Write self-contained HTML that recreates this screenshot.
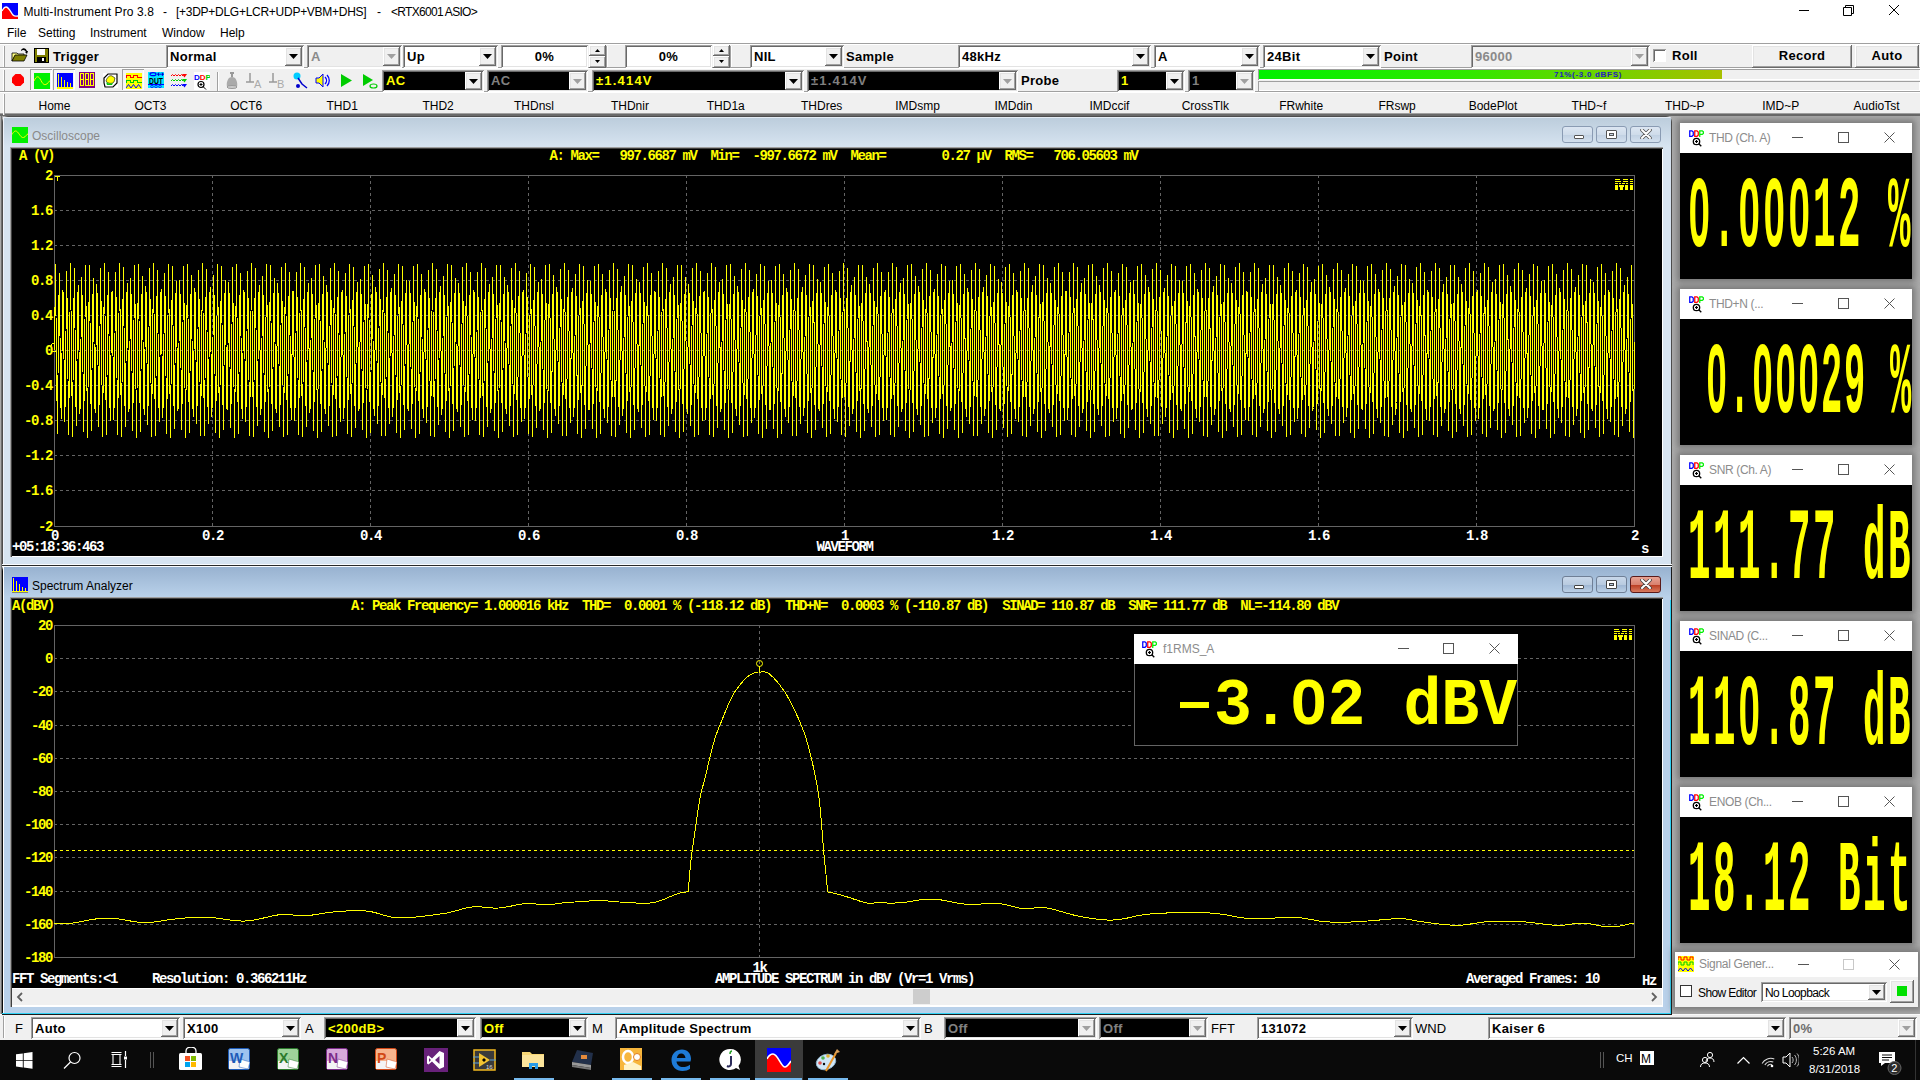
<!DOCTYPE html><html><head><meta charset="utf-8"><style>
*{margin:0;padding:0;box-sizing:border-box}
html,body{width:1920px;height:1080px;overflow:hidden;background:#ababab;position:relative}
div,svg{position:absolute}
.t{white-space:pre;line-height:1}
.ui{font-family:"Liberation Sans",sans-serif;font-size:12px;color:#000}
.tb{font-family:"Liberation Sans",sans-serif;font-size:13px;font-weight:bold;color:#000;letter-spacing:0.3px}
.pm{font-family:"Liberation Mono",monospace;font-weight:bold;font-size:14px;letter-spacing:-1.4px}
</style></head><body>
<div style="left:0px;top:0px;width:1920px;height:43px;background:#fff"></div>
<svg style="left:2px;top:3px" width="16" height="16"><rect width="16" height="16" fill="#f00"/><path d="M0 0H16V13 C14 13 13 14 11 12 C9 10 7 4 4 4 C2 4 1 6 0 8Z" fill="#00f"/><path d="M0 8 C1 6 2 4 4 4 C7 4 9 10 11 12 C13 14 14 13 16 13" stroke="#fff" stroke-width="1.3" fill="none"/></svg>
<div class="t ui" style="left:23.5px;top:6px;letter-spacing:0.1px">Multi-Instrument Pro 3.8</div>
<div class="t ui" style="left:163px;top:6px;">-</div>
<div class="t ui" style="left:176px;top:6px;letter-spacing:-0.27px">[+3DP+DLG+LCR+UDP+VBM+DHS]</div>
<div class="t ui" style="left:377px;top:6px;">-</div>
<div class="t ui" style="left:391px;top:6px;letter-spacing:-0.7px">&lt;RTX6001 ASIO&gt;</div>
<div style="left:1799px;top:10px;width:10px;height:1px;background:#000"></div>
<svg style="left:1843px;top:5px" width="11" height="11"><path d="M0.5 2.5h8v8h-8z M2.5 2.5v-2h8v8h-2" stroke="#000" fill="none"/></svg>
<svg style="left:1889px;top:5px" width="11" height="11"><path d="M0 0L10 10M10 0L0 10" stroke="#000" stroke-width="1"/></svg>
<div class="t ui" style="left:7px;top:27px;">File</div>
<div class="t ui" style="left:38px;top:27px;">Setting</div>
<div class="t ui" style="left:90px;top:27px;">Instrument</div>
<div class="t ui" style="left:162px;top:27px;">Window</div>
<div class="t ui" style="left:220px;top:27px;">Help</div>
<div style="left:0px;top:43px;width:1920px;height:1px;background:#a0a0a0"></div>
<div style="left:0px;top:44px;width:1920px;height:71px;background:#f0f0f0"></div>
<div style="left:0px;top:44px;width:1920px;height:1px;background:#fff"></div>
<div style="left:0px;top:67px;width:1920px;height:1px;background:#a0a0a0"></div>
<div style="left:0px;top:68px;width:1920px;height:1px;background:#fff"></div>
<div style="left:0px;top:91px;width:1920px;height:1px;background:#a0a0a0"></div>
<div style="left:0px;top:92px;width:1920px;height:1px;background:#fff"></div>
<div style="left:0px;top:113px;width:1920px;height:1px;background:#a0a0a0"></div>
<div style="left:0px;top:114px;width:1920px;height:2px;background:#696969"></div>
<div style="left:3px;top:46px;width:1px;height:21px;background:#fff"></div>
<div style="left:4px;top:46px;width:1px;height:21px;background:#a0a0a0"></div>
<div style="left:3px;top:70px;width:1px;height:21px;background:#fff"></div>
<div style="left:4px;top:70px;width:1px;height:21px;background:#a0a0a0"></div>
<div style="left:3px;top:94px;width:1px;height:21px;background:#fff"></div>
<div style="left:4px;top:94px;width:1px;height:21px;background:#a0a0a0"></div>
<svg style="left:11px;top:48px" width="17" height="15"><path d="M1 5h5l1 1h6v2H4L1 13Z" fill="#ffff80" stroke="#000" stroke-width="0.8"/><path d="M1 13L4 7h12l-3 6Z" fill="#808000" stroke="#000" stroke-width="0.8"/><path d="M10 3c2-2 4-1 5 1l-1 0 2 2 1-3h-1c-1-3-4-4-6-1" fill="#000"/></svg>
<svg style="left:34px;top:48px" width="15" height="15"><rect x="0.5" y="0.5" width="14" height="14" fill="#808000" stroke="#000"/><rect x="3" y="1" width="8" height="6" fill="#fff"/><rect x="3" y="9" width="9" height="5" fill="#000"/><rect x="8" y="10" width="2" height="3" fill="#fff"/></svg>
<div class="t tb" style="left:53px;top:50px;">Trigger</div>
<div style="left:166px;top:45px;width:138px;height:23px;box-shadow:inset 1px 1px #a0a0a0,inset -1px -1px #fff,inset 2px 2px #696969,inset -2px -2px #e3e3e3;background:#fff"></div>
<div style="left:285px;top:47px;width:17px;height:19px;box-shadow:inset -1px -1px #696969,inset 1px 1px #fff,inset -2px -2px #a0a0a0,inset 2px 2px #e3e3e3;background:#f0f0f0;"></div>
<svg style="left:289px;top:54px" width="9" height="5"><path d="M0 0H9L4.5 5Z" fill="#000"/></svg>
<div class="t tb" style="left:170px;top:50px;color:#000;">Normal</div>
<div style="left:307px;top:45px;width:95px;height:23px;box-shadow:inset 1px 1px #a0a0a0,inset -1px -1px #fff,inset 2px 2px #696969,inset -2px -2px #e3e3e3;background:#f0f0f0"></div>
<div style="left:383px;top:47px;width:17px;height:19px;box-shadow:inset -1px -1px #696969,inset 1px 1px #fff,inset -2px -2px #a0a0a0,inset 2px 2px #e3e3e3;background:#f0f0f0;"></div>
<svg style="left:387px;top:54px" width="9" height="5"><path d="M0 0H9L4.5 5Z" fill="#a0a0a0"/></svg>
<div class="t tb" style="left:311px;top:50px;color:#8a8a8a;">A</div>
<div style="left:403px;top:45px;width:95px;height:23px;box-shadow:inset 1px 1px #a0a0a0,inset -1px -1px #fff,inset 2px 2px #696969,inset -2px -2px #e3e3e3;background:#fff"></div>
<div style="left:479px;top:47px;width:17px;height:19px;box-shadow:inset -1px -1px #696969,inset 1px 1px #fff,inset -2px -2px #a0a0a0,inset 2px 2px #e3e3e3;background:#f0f0f0;"></div>
<svg style="left:483px;top:54px" width="9" height="5"><path d="M0 0H9L4.5 5Z" fill="#000"/></svg>
<div class="t tb" style="left:407px;top:50px;color:#000;">Up</div>
<div style="left:501px;top:45px;width:87px;height:23px;box-shadow:inset 1px 1px #a0a0a0,inset -1px -1px #fff,inset 2px 2px #696969,inset -2px -2px #e3e3e3;background:#fff"></div>
<div class="t tb" style="left:501px;top:50px;width:87px;text-align:center">0%</div>
<div style="left:589px;top:45px;width:17px;height:11px;box-shadow:inset -1px -1px #696969,inset 1px 1px #fff,inset -2px -2px #a0a0a0,inset 2px 2px #e3e3e3;background:#f0f0f0;"></div>
<div style="left:589px;top:56px;width:17px;height:12px;box-shadow:inset -1px -1px #696969,inset 1px 1px #fff,inset -2px -2px #a0a0a0,inset 2px 2px #e3e3e3;background:#f0f0f0;"></div>
<svg style="left:595px;top:49px" width="5" height="3"><path d="M0 3H5L2.5 0Z" fill="#000"/></svg>
<svg style="left:595px;top:60px" width="5" height="3"><path d="M0 0H5L2.5 3Z" fill="#000"/></svg>
<div style="left:606px;top:46px;width:1px;height:21px;background:#a0a0a0"></div>
<div style="left:607px;top:46px;width:1px;height:21px;background:#fff"></div>
<div style="left:625px;top:45px;width:87px;height:23px;box-shadow:inset 1px 1px #a0a0a0,inset -1px -1px #fff,inset 2px 2px #696969,inset -2px -2px #e3e3e3;background:#fff"></div>
<div class="t tb" style="left:625px;top:50px;width:87px;text-align:center">0%</div>
<div style="left:713px;top:45px;width:17px;height:11px;box-shadow:inset -1px -1px #696969,inset 1px 1px #fff,inset -2px -2px #a0a0a0,inset 2px 2px #e3e3e3;background:#f0f0f0;"></div>
<div style="left:713px;top:56px;width:17px;height:12px;box-shadow:inset -1px -1px #696969,inset 1px 1px #fff,inset -2px -2px #a0a0a0,inset 2px 2px #e3e3e3;background:#f0f0f0;"></div>
<svg style="left:719px;top:49px" width="5" height="3"><path d="M0 3H5L2.5 0Z" fill="#000"/></svg>
<svg style="left:719px;top:60px" width="5" height="3"><path d="M0 0H5L2.5 3Z" fill="#000"/></svg>
<div style="left:730px;top:46px;width:1px;height:21px;background:#a0a0a0"></div>
<div style="left:731px;top:46px;width:1px;height:21px;background:#fff"></div>
<div style="left:750px;top:45px;width:94px;height:23px;box-shadow:inset 1px 1px #a0a0a0,inset -1px -1px #fff,inset 2px 2px #696969,inset -2px -2px #e3e3e3;background:#fff"></div>
<div style="left:825px;top:47px;width:17px;height:19px;box-shadow:inset -1px -1px #696969,inset 1px 1px #fff,inset -2px -2px #a0a0a0,inset 2px 2px #e3e3e3;background:#f0f0f0;"></div>
<svg style="left:829px;top:54px" width="9" height="5"><path d="M0 0H9L4.5 5Z" fill="#000"/></svg>
<div class="t tb" style="left:754px;top:50px;color:#000;">NIL</div>
<div class="t tb" style="left:846px;top:50px;">Sample</div>
<div style="left:958px;top:45px;width:193px;height:23px;box-shadow:inset 1px 1px #a0a0a0,inset -1px -1px #fff,inset 2px 2px #696969,inset -2px -2px #e3e3e3;background:#fff"></div>
<div style="left:1132px;top:47px;width:17px;height:19px;box-shadow:inset -1px -1px #696969,inset 1px 1px #fff,inset -2px -2px #a0a0a0,inset 2px 2px #e3e3e3;background:#f0f0f0;"></div>
<svg style="left:1136px;top:54px" width="9" height="5"><path d="M0 0H9L4.5 5Z" fill="#000"/></svg>
<div class="t tb" style="left:962px;top:50px;color:#000;">48kHz</div>
<div style="left:1154px;top:45px;width:106px;height:23px;box-shadow:inset 1px 1px #a0a0a0,inset -1px -1px #fff,inset 2px 2px #696969,inset -2px -2px #e3e3e3;background:#fff"></div>
<div style="left:1241px;top:47px;width:17px;height:19px;box-shadow:inset -1px -1px #696969,inset 1px 1px #fff,inset -2px -2px #a0a0a0,inset 2px 2px #e3e3e3;background:#f0f0f0;"></div>
<svg style="left:1245px;top:54px" width="9" height="5"><path d="M0 0H9L4.5 5Z" fill="#000"/></svg>
<div class="t tb" style="left:1158px;top:50px;color:#000;">A</div>
<div style="left:1263px;top:45px;width:118px;height:23px;box-shadow:inset 1px 1px #a0a0a0,inset -1px -1px #fff,inset 2px 2px #696969,inset -2px -2px #e3e3e3;background:#fff"></div>
<div style="left:1362px;top:47px;width:17px;height:19px;box-shadow:inset -1px -1px #696969,inset 1px 1px #fff,inset -2px -2px #a0a0a0,inset 2px 2px #e3e3e3;background:#f0f0f0;"></div>
<svg style="left:1366px;top:54px" width="9" height="5"><path d="M0 0H9L4.5 5Z" fill="#000"/></svg>
<div class="t tb" style="left:1267px;top:50px;color:#000;">24Bit</div>
<div class="t tb" style="left:1384px;top:50px;">Point</div>
<div style="left:1471px;top:45px;width:179px;height:23px;box-shadow:inset 1px 1px #a0a0a0,inset -1px -1px #fff,inset 2px 2px #696969,inset -2px -2px #e3e3e3;background:#f0f0f0"></div>
<div style="left:1631px;top:47px;width:17px;height:19px;box-shadow:inset -1px -1px #696969,inset 1px 1px #fff,inset -2px -2px #a0a0a0,inset 2px 2px #e3e3e3;background:#f0f0f0;"></div>
<svg style="left:1635px;top:54px" width="9" height="5"><path d="M0 0H9L4.5 5Z" fill="#a0a0a0"/></svg>
<div class="t tb" style="left:1475px;top:50px;color:#8a8a8a;">96000</div>
<div style="left:1653px;top:49px;width:13px;height:13px;box-shadow:inset 1px 1px #a0a0a0,inset -1px -1px #fff,inset 2px 2px #696969;background:#fff"></div>
<div class="t tb" style="left:1672px;top:49px;">Roll</div>
<div style="left:1752px;top:45px;width:100px;height:23px;box-shadow:inset -1px -1px #696969,inset 1px 1px #fff,inset -2px -2px #a0a0a0,inset 2px 2px #e3e3e3;background:#f0f0f0;"></div>
<div class="t tb" style="left:1752px;top:49px;width:100px;text-align:center">Record</div>
<div style="left:1855px;top:45px;width:64px;height:23px;box-shadow:inset -1px -1px #696969,inset 1px 1px #fff,inset -2px -2px #a0a0a0,inset 2px 2px #e3e3e3;background:#f0f0f0;"></div>
<div class="t tb" style="left:1855px;top:49px;width:64px;text-align:center">Auto</div>
<svg style="left:12px;top:74px" width="12" height="12"><path d="M3.5 0h5l3.5 3.5v5L8.5 12h-5L0 8.5v-5Z" fill="#f00"/></svg>
<div style="left:30px;top:69px;width:22px;height:21px;box-shadow:inset 1px 1px #a0a0a0,inset -1px -1px #fff;background:#f4f4f4"></div>
<svg style="left:34px;top:73px" width="16" height="16"><rect width="16" height="16" fill="#00f000"/><path d="M0 8C2.5 2.5 4.5 2.5 7 7.5S11.5 13.5 16 7.5" stroke="#ff0" stroke-width="1" fill="none"/></svg>
<div style="left:53px;top:69px;width:22px;height:21px;box-shadow:inset 1px 1px #a0a0a0,inset -1px -1px #fff;background:#f4f4f4"></div>
<svg style="left:57px;top:73px" width="16" height="16" shape-rendering="crispEdges"><rect width="16" height="16" fill="#00f"/><path d="M1.5 1v13M4.5 4v10M7.5 7v7M10.5 9v5M13.5 10v4" stroke="#ff0" stroke-width="1"/><rect x="0" y="14" width="16" height="2" fill="#ff0"/></svg>
<svg style="left:79px;top:72px" width="16" height="16" shape-rendering="crispEdges"><rect width="16" height="16" fill="#800080"/><path d="M1.5 1.5h3v5.5h-3zM1.5 7h3v6.5h-3z" stroke="#ff0" fill="none"/><path d="M6.5 1.5h3v5.5h-3zM6.5 7h3v6.5h-3z" stroke="#ff0" fill="none"/><path d="M11.5 1.5h3v5.5h-3zM11.5 7h3v6.5h-3z" stroke="#ff0" fill="none"/><rect x="10" y="13" width="1" height="1" fill="#ff0"/></svg>
<svg style="left:103px;top:73px" width="15" height="15"><rect width="15" height="15" fill="#fff"/><path d="M1 10V5l4-4h9v9l-4 4H2Z" fill="none" stroke="#000" stroke-width="1.2"/><path d="M3 8c1-4 4-6 6-5l3 2-1 4c-2 2-6 2-8-1Z" fill="#ff0" stroke="#000" stroke-width="0.6"/><path d="M3 9c2 2 5 2 7 1l-1 2H4Z" fill="#0c0"/></svg>
<div style="left:122px;top:69px;width:22px;height:21px;box-shadow:inset 1px 1px #a0a0a0,inset -1px -1px #fff;background:#f4f4f4"></div>
<svg style="left:126px;top:73px" width="16" height="16" shape-rendering="crispEdges"><rect width="16" height="16" fill="#ff0"/><path d="M0.5 5V2.5h4v2h3v-2h4v2h4" stroke="#f00" fill="none"/><path d="M0.5 9.5V7.5h4v2h3v-2h4v2h4" stroke="#0c0" fill="none"/><path d="M0 15l2.5-3.5 2.5 3.5 2.5-3.5 2.5 3.5 2.5-3.5 2.5 3.5" stroke="#00f" fill="none" shape-rendering="auto"/></svg>
<svg style="left:148px;top:72px" width="16" height="16"><rect width="16" height="16" fill="#00e8ff"/><ellipse cx="5" cy="2.2" rx="3" ry="1.5" fill="none" stroke="#00f" stroke-width="1.2"/><path d="M10 2.2h5M11 0.5l-1.5 1.7 1.5 1.7M14 0.5l1.5 1.7-1.5 1.7" stroke="#00f" stroke-width="1"/><text x="1" y="11.5" font-family="Liberation Sans" font-weight="bold" font-size="8.5" textLength="14" lengthAdjust="spacingAndGlyphs" fill="#000">DUT</text><path d="M0 12.5h16" stroke="#00f"/><circle cx="4" cy="14.5" r="1.3" fill="none" stroke="#00f" stroke-width="0.8"/><circle cx="8" cy="14.5" r="1.3" fill="none" stroke="#00f" stroke-width="0.8"/><circle cx="12" cy="14.5" r="1.3" fill="none" stroke="#00f" stroke-width="0.8"/></svg>
<svg style="left:171px;top:73px" width="16" height="15"><path d="M0 3l1.5-1.5 1.5 1.5 1.5-1.5 1.5 1.5 1.5-1.5 1.5 1.5 1.5-1.5 1.5 1.5" stroke="#f00" fill="none"/><path d="M11 1h5l-2.5 3.5Z" fill="#f00"/><path d="M0 8l1.5-1.5 1.5 1.5 1.5-1.5 1.5 1.5 1.5-1.5 1.5 1.5 1.5-1.5 1.5 1.5" stroke="#0c0" fill="none"/><path d="M11 6h5l-2.5 3.5Z" fill="#0c0"/><path d="M0 13l1.5-1.5 1.5 1.5 1.5-1.5 1.5 1.5 1.5-1.5 1.5 1.5 1.5-1.5 1.5 1.5" stroke="#00f" fill="none"/><path d="M11 11h5l-2.5 3.5Z" fill="#00f"/></svg>
<svg style="left:194px;top:72px" width="16" height="18"><rect width="16" height="18" fill="#fff"/><text x="0" y="8" font-family="Liberation Sans" font-weight="bold" font-size="8"><tspan fill="#00f">D</tspan><tspan fill="#f00">D</tspan><tspan fill="#0c0">P</tspan></text><circle cx="7" cy="12.5" r="3" stroke="#000" fill="none" stroke-width="1.2"/><path d="M9 14.5l3 3M5.5 12.5h3M7 11v3" stroke="#000"/></svg>
<div style="left:217px;top:72px;width:1px;height:19px;background:#a0a0a0"></div>
<div style="left:218px;top:72px;width:1px;height:19px;background:#fff"></div>
<svg style="left:225px;top:72px" width="14" height="17"><rect x="5" y="0" width="4" height="2" fill="#999"/><rect x="6" y="2" width="2" height="3" fill="#999"/><path d="M2 15C1 10 3 5 7 5s6 5 5 10Z" fill="#aaa"/><ellipse cx="7" cy="15" rx="5" ry="1.5" fill="#ccc" stroke="#999"/></svg>
<svg style="left:246px;top:72px" width="18" height="17"><path d="M4 1v9M0 10h8" stroke="#999" stroke-width="1.5"/><text x="8" y="16" font-family="Liberation Sans" font-size="11" fill="#aaa">A</text></svg>
<svg style="left:269px;top:72px" width="18" height="17"><path d="M4 1v9M0 10h8" stroke="#999" stroke-width="1.5"/><text x="8" y="16" font-family="Liberation Sans" font-size="11" fill="#aaa">B</text></svg>
<svg style="left:293px;top:72px" width="16" height="17"><circle cx="4" cy="4" r="3.5" fill="#0cf"/><path d="M5 6l4 6 5 4" stroke="#00c" stroke-width="1.5" fill="none"/><circle cx="5" cy="14" r="2" fill="#00c"/></svg>
<svg style="left:315px;top:72px" width="17" height="17"><path d="M1 6h3l4-4v13l-4-4H1Z" fill="#ff0" stroke="#00f"/><path d="M10 5c2 2 2 5 0 7M12 3c3 3 3 8 0 11" stroke="#00f" fill="none" stroke-width="1.3"/></svg>
<svg style="left:341px;top:74px" width="12" height="13"><path d="M0 0L11 6.5 0 13Z" fill="#0c0"/></svg>
<svg style="left:363px;top:74px" width="15" height="15"><path d="M0 0L10 6 0 12Z" fill="#0c0"/><ellipse cx="10.5" cy="12" rx="3.5" ry="2" fill="none" stroke="#0c0" stroke-width="1.2"/></svg>
<div style="left:382px;top:70px;width:102px;height:22px;box-shadow:inset 1px 1px #a0a0a0,inset -1px -1px #fff,inset 2px 2px #696969,inset -2px -2px #e3e3e3;background:#000"></div>
<div style="left:465px;top:72px;width:17px;height:18px;box-shadow:inset -1px -1px #696969,inset 1px 1px #fff,inset -2px -2px #a0a0a0,inset 2px 2px #e3e3e3;background:#f0f0f0;"></div>
<svg style="left:469px;top:79px" width="9" height="5"><path d="M0 0H9L4.5 5Z" fill="#000"/></svg>
<div class="t tb" style="left:386px;top:74px;color:#ff0;">AC</div>
<div style="left:487px;top:70px;width:101px;height:22px;box-shadow:inset 1px 1px #a0a0a0,inset -1px -1px #fff,inset 2px 2px #696969,inset -2px -2px #e3e3e3;background:#000"></div>
<div style="left:569px;top:72px;width:17px;height:18px;box-shadow:inset -1px -1px #696969,inset 1px 1px #fff,inset -2px -2px #a0a0a0,inset 2px 2px #e3e3e3;background:#f0f0f0;"></div>
<svg style="left:573px;top:79px" width="9" height="5"><path d="M0 0H9L4.5 5Z" fill="#a0a0a0"/></svg>
<div class="t tb" style="left:491px;top:74px;color:#808080;">AC</div>
<div style="left:592px;top:70px;width:212px;height:22px;box-shadow:inset 1px 1px #a0a0a0,inset -1px -1px #fff,inset 2px 2px #696969,inset -2px -2px #e3e3e3;background:#000"></div>
<div style="left:785px;top:72px;width:17px;height:18px;box-shadow:inset -1px -1px #696969,inset 1px 1px #fff,inset -2px -2px #a0a0a0,inset 2px 2px #e3e3e3;background:#f0f0f0;"></div>
<svg style="left:789px;top:79px" width="9" height="5"><path d="M0 0H9L4.5 5Z" fill="#000"/></svg>
<div class="t tb" style="left:596px;top:74px;color:#ff0;letter-spacing:1.2px">±1.414V</div>
<div style="left:807px;top:70px;width:211px;height:22px;box-shadow:inset 1px 1px #a0a0a0,inset -1px -1px #fff,inset 2px 2px #696969,inset -2px -2px #e3e3e3;background:#000"></div>
<div style="left:999px;top:72px;width:17px;height:18px;box-shadow:inset -1px -1px #696969,inset 1px 1px #fff,inset -2px -2px #a0a0a0,inset 2px 2px #e3e3e3;background:#f0f0f0;"></div>
<svg style="left:1003px;top:79px" width="9" height="5"><path d="M0 0H9L4.5 5Z" fill="#a0a0a0"/></svg>
<div class="t tb" style="left:811px;top:74px;color:#808080;letter-spacing:1.2px">±1.414V</div>
<div class="t tb" style="left:1021px;top:74px;">Probe</div>
<div style="left:1117px;top:70px;width:68px;height:22px;box-shadow:inset 1px 1px #a0a0a0,inset -1px -1px #fff,inset 2px 2px #696969,inset -2px -2px #e3e3e3;background:#000"></div>
<div style="left:1166px;top:72px;width:17px;height:18px;box-shadow:inset -1px -1px #696969,inset 1px 1px #fff,inset -2px -2px #a0a0a0,inset 2px 2px #e3e3e3;background:#f0f0f0;"></div>
<svg style="left:1170px;top:79px" width="9" height="5"><path d="M0 0H9L4.5 5Z" fill="#000"/></svg>
<div class="t tb" style="left:1121px;top:74px;color:#ff0;">1</div>
<div style="left:1188px;top:70px;width:67px;height:22px;box-shadow:inset 1px 1px #a0a0a0,inset -1px -1px #fff,inset 2px 2px #696969,inset -2px -2px #e3e3e3;background:#000"></div>
<div style="left:1236px;top:72px;width:17px;height:18px;box-shadow:inset -1px -1px #696969,inset 1px 1px #fff,inset -2px -2px #a0a0a0,inset 2px 2px #e3e3e3;background:#f0f0f0;"></div>
<svg style="left:1240px;top:79px" width="9" height="5"><path d="M0 0H9L4.5 5Z" fill="#a0a0a0"/></svg>
<div class="t tb" style="left:1192px;top:74px;color:#808080;">1</div>
<div style="left:1258px;top:69px;width:662px;height:11px;box-shadow:inset 1px 1px #a0a0a0,inset -1px -1px #fff;background:#f0f0f0"></div>
<div style="left:1259px;top:70px;width:463px;height:9px;background:linear-gradient(90deg,#00f000 0%,#30e800 45%,#a8c000 100%)"></div>
<div class="t " style="left:1554px;top:71px;font-family:Liberation Sans;font-weight:bold;font-size:8px;letter-spacing:0.7px;color:#2020c0">71%(-3.0 dBFS)</div>
<div style="left:1258px;top:81px;width:662px;height:10px;box-shadow:inset 1px 1px #a0a0a0,inset -1px -1px #fff;background:#f0f0f0"></div>
<div class="t ui" style="left:6.5px;top:100px;width:96px;text-align:center">Home</div>
<div class="t ui" style="left:102.4px;top:100px;width:96px;text-align:center">OCT3</div>
<div class="t ui" style="left:198.3px;top:100px;width:96px;text-align:center">OCT6</div>
<div class="t ui" style="left:294.2px;top:100px;width:96px;text-align:center">THD1</div>
<div class="t ui" style="left:390.1px;top:100px;width:96px;text-align:center">THD2</div>
<div class="t ui" style="left:486.0px;top:100px;width:96px;text-align:center">THDnsl</div>
<div class="t ui" style="left:581.9px;top:100px;width:96px;text-align:center">THDnir</div>
<div class="t ui" style="left:677.8px;top:100px;width:96px;text-align:center">THD1a</div>
<div class="t ui" style="left:773.7px;top:100px;width:96px;text-align:center">THDres</div>
<div class="t ui" style="left:869.6px;top:100px;width:96px;text-align:center">IMDsmp</div>
<div class="t ui" style="left:965.5px;top:100px;width:96px;text-align:center">IMDdin</div>
<div class="t ui" style="left:1061.4px;top:100px;width:96px;text-align:center">IMDccif</div>
<div class="t ui" style="left:1157.3px;top:100px;width:96px;text-align:center">CrossTlk</div>
<div class="t ui" style="left:1253.2px;top:100px;width:96px;text-align:center">FRwhite</div>
<div class="t ui" style="left:1349.1px;top:100px;width:96px;text-align:center">FRswp</div>
<div class="t ui" style="left:1445.0px;top:100px;width:96px;text-align:center">BodePlot</div>
<div class="t ui" style="left:1540.9px;top:100px;width:96px;text-align:center">THD~f</div>
<div class="t ui" style="left:1636.8px;top:100px;width:96px;text-align:center">THD~P</div>
<div class="t ui" style="left:1732.7px;top:100px;width:96px;text-align:center">IMD~P</div>
<div class="t ui" style="left:1828.6px;top:100px;width:96px;text-align:center">AudioTst</div>
<div style="left:0px;top:1014px;width:1920px;height:26px;background:#f0f0f0"></div>
<div style="left:0px;top:1014px;width:1920px;height:1px;background:#fff"></div>
<div style="left:3px;top:1016px;width:1px;height:22px;background:#a0a0a0"></div>
<div style="left:4px;top:1016px;width:1px;height:22px;background:#fff"></div>
<div class="t ui" style="left:15px;top:1022px;font-size:13px">F</div>
<div style="left:31px;top:1017px;width:149px;height:22px;box-shadow:inset 1px 1px #a0a0a0,inset -1px -1px #fff,inset 2px 2px #696969,inset -2px -2px #e3e3e3;background:#fff"></div>
<div style="left:161px;top:1019px;width:17px;height:18px;box-shadow:inset -1px -1px #696969,inset 1px 1px #fff,inset -2px -2px #a0a0a0,inset 2px 2px #e3e3e3;background:#f0f0f0;"></div>
<svg style="left:165px;top:1026px" width="9" height="5"><path d="M0 0H9L4.5 5Z" fill="#000"/></svg>
<div class="t tb" style="left:35px;top:1022px;color:#000;">Auto</div>
<div style="left:183px;top:1017px;width:118px;height:22px;box-shadow:inset 1px 1px #a0a0a0,inset -1px -1px #fff,inset 2px 2px #696969,inset -2px -2px #e3e3e3;background:#fff"></div>
<div style="left:282px;top:1019px;width:17px;height:18px;box-shadow:inset -1px -1px #696969,inset 1px 1px #fff,inset -2px -2px #a0a0a0,inset 2px 2px #e3e3e3;background:#f0f0f0;"></div>
<svg style="left:286px;top:1026px" width="9" height="5"><path d="M0 0H9L4.5 5Z" fill="#000"/></svg>
<div class="t tb" style="left:187px;top:1022px;color:#000;">X100</div>
<div class="t ui" style="left:305px;top:1022px;font-size:13px">A</div>
<div style="left:324px;top:1017px;width:152px;height:22px;box-shadow:inset 1px 1px #a0a0a0,inset -1px -1px #fff,inset 2px 2px #696969,inset -2px -2px #e3e3e3;background:#000"></div>
<div style="left:457px;top:1019px;width:17px;height:18px;box-shadow:inset -1px -1px #696969,inset 1px 1px #fff,inset -2px -2px #a0a0a0,inset 2px 2px #e3e3e3;background:#f0f0f0;"></div>
<svg style="left:461px;top:1026px" width="9" height="5"><path d="M0 0H9L4.5 5Z" fill="#000"/></svg>
<div class="t tb" style="left:328px;top:1022px;color:#ff0;">&lt;200dB&gt;</div>
<div style="left:480px;top:1017px;width:108px;height:22px;box-shadow:inset 1px 1px #a0a0a0,inset -1px -1px #fff,inset 2px 2px #696969,inset -2px -2px #e3e3e3;background:#000"></div>
<div style="left:569px;top:1019px;width:17px;height:18px;box-shadow:inset -1px -1px #696969,inset 1px 1px #fff,inset -2px -2px #a0a0a0,inset 2px 2px #e3e3e3;background:#f0f0f0;"></div>
<svg style="left:573px;top:1026px" width="9" height="5"><path d="M0 0H9L4.5 5Z" fill="#000"/></svg>
<div class="t tb" style="left:484px;top:1022px;color:#ff0;">Off</div>
<div class="t ui" style="left:592px;top:1022px;font-size:13px">M</div>
<div style="left:615px;top:1017px;width:306px;height:22px;box-shadow:inset 1px 1px #a0a0a0,inset -1px -1px #fff,inset 2px 2px #696969,inset -2px -2px #e3e3e3;background:#fff"></div>
<div style="left:902px;top:1019px;width:17px;height:18px;box-shadow:inset -1px -1px #696969,inset 1px 1px #fff,inset -2px -2px #a0a0a0,inset 2px 2px #e3e3e3;background:#f0f0f0;"></div>
<svg style="left:906px;top:1026px" width="9" height="5"><path d="M0 0H9L4.5 5Z" fill="#000"/></svg>
<div class="t tb" style="left:619px;top:1022px;color:#000;">Amplitude Spectrum</div>
<div class="t ui" style="left:924px;top:1022px;font-size:13px">B</div>
<div style="left:944px;top:1017px;width:153px;height:22px;box-shadow:inset 1px 1px #a0a0a0,inset -1px -1px #fff,inset 2px 2px #696969,inset -2px -2px #e3e3e3;background:#000"></div>
<div style="left:1078px;top:1019px;width:17px;height:18px;box-shadow:inset -1px -1px #696969,inset 1px 1px #fff,inset -2px -2px #a0a0a0,inset 2px 2px #e3e3e3;background:#f0f0f0;"></div>
<svg style="left:1082px;top:1026px" width="9" height="5"><path d="M0 0H9L4.5 5Z" fill="#a0a0a0"/></svg>
<div class="t tb" style="left:948px;top:1022px;color:#808080;">Off</div>
<div style="left:1099px;top:1017px;width:109px;height:22px;box-shadow:inset 1px 1px #a0a0a0,inset -1px -1px #fff,inset 2px 2px #696969,inset -2px -2px #e3e3e3;background:#000"></div>
<div style="left:1189px;top:1019px;width:17px;height:18px;box-shadow:inset -1px -1px #696969,inset 1px 1px #fff,inset -2px -2px #a0a0a0,inset 2px 2px #e3e3e3;background:#f0f0f0;"></div>
<svg style="left:1193px;top:1026px" width="9" height="5"><path d="M0 0H9L4.5 5Z" fill="#a0a0a0"/></svg>
<div class="t tb" style="left:1103px;top:1022px;color:#808080;">Off</div>
<div class="t ui" style="left:1211px;top:1022px;font-size:13px">FFT</div>
<div style="left:1257px;top:1017px;width:156px;height:22px;box-shadow:inset 1px 1px #a0a0a0,inset -1px -1px #fff,inset 2px 2px #696969,inset -2px -2px #e3e3e3;background:#fff"></div>
<div style="left:1394px;top:1019px;width:17px;height:18px;box-shadow:inset -1px -1px #696969,inset 1px 1px #fff,inset -2px -2px #a0a0a0,inset 2px 2px #e3e3e3;background:#f0f0f0;"></div>
<svg style="left:1398px;top:1026px" width="9" height="5"><path d="M0 0H9L4.5 5Z" fill="#000"/></svg>
<div class="t tb" style="left:1261px;top:1022px;color:#000;">131072</div>
<div class="t ui" style="left:1415px;top:1022px;font-size:13px">WND</div>
<div style="left:1488px;top:1017px;width:298px;height:22px;box-shadow:inset 1px 1px #a0a0a0,inset -1px -1px #fff,inset 2px 2px #696969,inset -2px -2px #e3e3e3;background:#fff"></div>
<div style="left:1767px;top:1019px;width:17px;height:18px;box-shadow:inset -1px -1px #696969,inset 1px 1px #fff,inset -2px -2px #a0a0a0,inset 2px 2px #e3e3e3;background:#f0f0f0;"></div>
<svg style="left:1771px;top:1026px" width="9" height="5"><path d="M0 0H9L4.5 5Z" fill="#000"/></svg>
<div class="t tb" style="left:1492px;top:1022px;color:#000;">Kaiser 6</div>
<div style="left:1789px;top:1017px;width:128px;height:22px;box-shadow:inset 1px 1px #a0a0a0,inset -1px -1px #fff,inset 2px 2px #696969,inset -2px -2px #e3e3e3;background:#f0f0f0"></div>
<div style="left:1898px;top:1019px;width:17px;height:18px;box-shadow:inset -1px -1px #696969,inset 1px 1px #fff,inset -2px -2px #a0a0a0,inset 2px 2px #e3e3e3;background:#f0f0f0;"></div>
<svg style="left:1902px;top:1026px" width="9" height="5"><path d="M0 0H9L4.5 5Z" fill="#a0a0a0"/></svg>
<div class="t tb" style="left:1793px;top:1022px;color:#6d6d6d;">0%</div>
<div style="left:0px;top:116px;width:1px;height:898px;background:#aaaaaa"></div>
<div style="left:1px;top:116px;width:1px;height:898px;background:#707070"></div>
<div style="left:2px;top:116px;width:1670px;height:451px;background:#4d4d4d;border-radius:6px 6px 0 0"></div>
<div style="left:3px;top:117px;width:1668px;height:449px;background:#d7e4f1;border-radius:5px 5px 0 0"></div>
<div style="left:3px;top:117px;width:1668px;height:1px;background:#e4ecf5;border-radius:5px 5px 0 0"></div>
<div style="left:3px;top:118px;width:1668px;height:29px;background:linear-gradient(#bccddc,#d7e4f1)"></div>
<div style="left:3px;top:117px;width:1px;height:449px;background:#eef2fa"></div>
<div style="left:2px;top:565px;width:1670px;height:2px;background:#2a2a2a"></div>
<div style="left:10px;top:147px;width:1653px;height:410px;background:#fff;box-shadow:inset 1px 1px #a0a0a0,inset 2px 2px #404040"></div>
<div style="left:12px;top:149px;width:1650px;height:407px;background:#000"></div>
<div style="left:2px;top:564px;width:1670px;height:1px;background:#fafcff"></div>
<svg style="left:12px;top:127px" width="16" height="16"><rect width="16" height="16" fill="#00f000"/><path d="M0 7.5C2 4 3.5 3 5.5 5S9 11 11.5 10.5 14.5 7 16 7" stroke="#ff0" stroke-width="1" fill="none"/></svg>
<div class="t ui" style="left:32px;top:130px;color:#8a8a8a;font-size:12px">Oscilloscope</div>
<div style="left:1562px;top:126px;width:31px;height:17px;border:1px solid #8a9bb3;border-radius:3px;background:linear-gradient(#dce6f2 0%,#cfdcea 50%,#c0d0e2 51%,#d3e0ee 100%)"></div>
<div style="left:1596px;top:126px;width:31px;height:17px;border:1px solid #8a9bb3;border-radius:3px;background:linear-gradient(#dce6f2 0%,#cfdcea 50%,#c0d0e2 51%,#d3e0ee 100%)"></div>
<div style="left:1630px;top:126px;width:31px;height:17px;border:1px solid #8a9bb3;border-radius:3px;background:linear-gradient(#dce6f2 0%,#cfdcea 50%,#c0d0e2 51%,#d3e0ee 100%)"></div>
<div style="left:1574px;top:135px;width:10px;height:4px;background:#fff;border:1px solid #555;border-radius:1px"></div>
<div style="left:1606px;top:130px;width:11px;height:9px;background:#fff;border:1px solid #555;border-radius:1px"></div>
<div style="left:1609px;top:133px;width:5px;height:3px;background:#c8d5e4;border:1px solid #555"></div>
<svg style="left:1640px;top:129px" width="12" height="10"><path d="M2 1L10 9M10 1L2 9" stroke="#555" stroke-width="3.6" stroke-linecap="round"/><path d="M2 1L10 9M10 1L2 9" stroke="#fff" stroke-width="2" stroke-linecap="round"/></svg>
<div style="left:2px;top:565px;width:1670px;height:450px;background:#0a0a0a;border-radius:6px 6px 0 0"></div>
<div style="left:3px;top:566px;width:1668px;height:448px;background:#b9d1ea;border-radius:5px 5px 0 0"></div>
<div style="left:3px;top:566px;width:1668px;height:1px;background:#f4f8fc;border-radius:5px 5px 0 0"></div>
<div style="left:3px;top:567px;width:1668px;height:29px;background:linear-gradient(#98b2d0,#b8d0e9)"></div>
<div style="left:3px;top:566px;width:1px;height:448px;background:#ffffff"></div>
<div style="left:2px;top:565px;width:1670px;height:1px;background:#2a2a2a"></div>
<div style="left:2px;top:566px;width:1670px;height:1px;background:#fafcff"></div>
<div style="left:1669px;top:600px;width:2px;height:413px;background:#b9d1ea"></div>
<div style="left:1670px;top:600px;width:1px;height:413px;background:#2fd2f5"></div>
<div style="left:2px;top:1013px;width:1670px;height:1px;background:#2fd2f5"></div>
<div style="left:2px;top:1014px;width:1670px;height:1px;background:#1a1a1a"></div>
<div style="left:1671px;top:567px;width:1px;height:448px;background:#1a1a1a"></div>
<div style="left:10px;top:597px;width:1653px;height:410px;background:#fff;box-shadow:inset 1px 1px #a0a0a0,inset 2px 2px #404040"></div>
<div style="left:12px;top:599px;width:1650px;height:389px;background:#000"></div>
<div style="left:12px;top:989px;width:1650px;height:16px;background:#f0f0f0"></div>
<div style="left:913px;top:989px;width:17px;height:15px;background:#cdcdcd"></div>
<svg style="left:16px;top:992px" width="8" height="10"><path d="M6 1L2 5 6 9" stroke="#606060" stroke-width="1.8" fill="none"/></svg>
<svg style="left:1650px;top:992px" width="8" height="10"><path d="M2 1L6 5 2 9" stroke="#606060" stroke-width="1.8" fill="none"/></svg>
<svg style="left:12px;top:577px" width="16" height="16"><rect width="16" height="16" fill="#0000ff"/><path d="M1.5 1v13M4.5 4v10M7.5 7v7M10.5 10v4M13.5 11v3" stroke="#ff0" stroke-width="1"/><rect x="0" y="14" width="16" height="1.5" fill="#ff0"/></svg>
<div class="t ui" style="left:32px;top:580px;color:#000;font-size:12px">Spectrum Analyzer</div>
<div style="left:1562px;top:576px;width:31px;height:17px;border:1px solid #6f7f96;border-radius:3px;background:linear-gradient(#c9d8ea 0%,#b9cbe0 50%,#9db5d2 51%,#bcd0e6 100%)"></div>
<div style="left:1596px;top:576px;width:31px;height:17px;border:1px solid #6f7f96;border-radius:3px;background:linear-gradient(#c9d8ea 0%,#b9cbe0 50%,#9db5d2 51%,#bcd0e6 100%)"></div>
<div style="left:1630px;top:576px;width:31px;height:17px;border:1px solid #5a1a1a;border-radius:3px;background:linear-gradient(#e8a394 0%,#d9826f 50%,#b93a1f 51%,#d87a5e 100%)"></div>
<div style="left:1574px;top:585px;width:10px;height:4px;background:#fff;border:1px solid #444;border-radius:1px"></div>
<div style="left:1606px;top:580px;width:11px;height:9px;background:#fff;border:1px solid #444;border-radius:1px"></div>
<div style="left:1609px;top:583px;width:5px;height:3px;background:#b8cbe0;border:1px solid #444"></div>
<svg style="left:1640px;top:579px" width="12" height="10"><path d="M2 1L10 9M10 1L2 9" stroke="#444" stroke-width="3.6" stroke-linecap="round"/><path d="M2 1L10 9M10 1L2 9" stroke="#fff" stroke-width="2" stroke-linecap="round"/></svg>
<svg style="left:0;top:0" width="1920" height="1080" shape-rendering="crispEdges"><path d="M212.5 175V526M370.5 175V526M528.5 175V526M686.5 175V526M844.5 175V526M1002.5 175V526M1160.5 175V526M1318.5 175V526M1476.5 175V526M54 210.5H1634M54 245.5H1634M54 280.5H1634M54 315.5H1634M54 350.5H1634M54 385.5H1634M54 420.5H1634M54 455.5H1634M54 490.5H1634" stroke="#646464" stroke-dasharray="3 3" fill="none"/><rect x="54.5" y="175.5" width="1580" height="351" stroke="#646464" fill="none"/><polyline points="54.5,350.5 55.5,263.6 56.5,367.1 57.5,434.2 58.5,318.0 59.5,273.0 60.5,397.8 61.5,419.0 62.5,290.1 63.5,293.5 64.5,421.8 65.5,393.9 66.5,271.0 67.5,322.3 68.5,435.4 69.5,362.5 70.5,263.3 71.5,355.1 72.5,436.8 73.5,329.4 74.5,268.2 75.5,387.3 76.5,425.8 77.5,299.4 78.5,284.9 79.5,414.1 80.5,403.9 81.5,276.7 82.5,311.2 83.5,431.8 84.5,374.3 85.5,264.6 86.5,343.0 87.5,437.8 88.5,341.3 89.5,265.0 90.5,376.0 91.5,431.2 92.5,309.6 93.5,277.6 94.5,405.3 95.5,412.9 96.5,283.8 97.5,300.8 98.5,426.7 99.5,385.7 100.5,267.6 101.5,331.1 102.5,437.1 103.5,353.4 104.5,263.4 105.5,364.3 106.5,435.0 107.5,320.6 108.5,271.7 109.5,395.4 110.5,420.7 111.5,292.2 112.5,291.4 113.5,420.1 114.5,396.3 115.5,272.2 116.5,319.6 117.5,434.7 118.5,365.3 119.5,263.4 120.5,352.3 121.5,437.2 122.5,332.2 123.5,267.3 124.5,384.7 125.5,427.2 126.5,301.7 127.5,283.1 128.5,412.2 129.5,406.1 130.5,278.2 131.5,308.6 132.5,430.8 133.5,377.1 134.5,265.2 135.5,340.2 136.5,437.8 137.5,344.1 138.5,264.4 139.5,373.3 140.5,432.2 141.5,312.1 142.5,276.1 143.5,403.0 144.5,414.9 145.5,285.7 146.5,298.5 147.5,425.2 148.5,388.3 149.5,268.5 150.5,328.4 151.5,436.7 152.5,356.2 153.5,263.2 154.5,361.4 155.5,435.7 156.5,323.3 157.5,270.5 158.5,392.9 159.5,422.4 160.5,294.3 161.5,289.3 162.5,418.3 163.5,398.8 164.5,273.5 165.5,316.9 166.5,433.9 167.5,368.1 168.5,263.7 169.5,349.4 170.5,437.5 171.5,335.0 172.5,266.5 173.5,382.0 174.5,428.5 175.5,304.1 176.5,281.3 177.5,410.1 178.5,408.3 179.5,279.9 180.5,306.2 181.5,429.6 182.5,379.8 183.5,265.8 184.5,337.4 185.5,437.7 186.5,347.0 187.5,264.0 188.5,370.5 189.5,433.2 190.5,314.7 191.5,274.6 192.5,400.7 193.5,416.8 194.5,287.6 195.5,296.2 196.5,423.7 197.5,390.8 198.5,269.6 199.5,325.6 200.5,436.2 201.5,359.0 202.5,263.2 203.5,358.6 204.5,436.3 205.5,326.0 206.5,269.4 207.5,390.4 208.5,424.0 209.5,296.6 210.5,287.3 211.5,416.5 212.5,401.1 213.5,274.9 214.5,314.3 215.5,433.0 216.5,370.9 217.5,264.1 218.5,346.6 219.5,437.7 220.5,337.8 221.5,265.7 222.5,379.3 223.5,429.8 224.5,306.5 225.5,279.6 226.5,408.0 227.5,410.4 228.5,281.6 229.5,303.7 230.5,428.3 231.5,382.4 232.5,266.6 233.5,334.6 234.5,437.5 235.5,349.8 236.5,263.7 237.5,367.7 238.5,434.1 239.5,317.3 240.5,273.3 241.5,398.4 242.5,418.6 243.5,289.6 244.5,294.0 245.5,422.1 246.5,393.3 247.5,270.7 248.5,322.9 249.5,435.6 250.5,361.9 251.5,263.3 252.5,355.8 253.5,436.7 254.5,328.8 255.5,268.4 256.5,387.9 257.5,425.5 258.5,298.8 259.5,285.4 260.5,414.6 261.5,403.4 262.5,276.3 263.5,311.7 264.5,432.1 265.5,373.7 266.5,264.5 267.5,343.7 268.5,437.8 269.5,340.6 270.5,265.1 271.5,376.6 272.5,430.9 273.5,309.0 274.5,278.0 275.5,405.8 276.5,412.5 277.5,283.4 278.5,301.3 279.5,427.0 280.5,385.1 281.5,267.4 282.5,331.8 283.5,437.2 284.5,352.7 285.5,263.4 286.5,364.9 287.5,434.8 288.5,320.0 289.5,272.0 290.5,396.0 291.5,420.3 292.5,291.7 293.5,291.9 294.5,420.5 295.5,395.8 296.5,271.9 297.5,320.2 298.5,434.9 299.5,364.7 300.5,263.4 301.5,352.9 302.5,437.1 303.5,331.6 304.5,267.5 305.5,385.3 306.5,426.9 307.5,301.2 308.5,283.5 309.5,412.6 310.5,405.6 311.5,277.9 312.5,309.2 313.5,431.0 314.5,376.4 315.5,265.0 316.5,340.9 317.5,437.8 318.5,343.5 319.5,264.5 320.5,373.9 321.5,432.0 322.5,311.6 323.5,276.4 324.5,403.6 325.5,414.4 326.5,285.2 327.5,299.0 328.5,425.6 329.5,387.7 330.5,268.3 331.5,329.0 332.5,436.8 333.5,355.5 334.5,263.3 335.5,362.1 336.5,435.5 337.5,322.7 338.5,270.8 339.5,393.5 340.5,422.0 341.5,293.8 342.5,289.8 343.5,418.7 344.5,398.2 345.5,273.2 346.5,317.5 347.5,434.1 348.5,367.5 349.5,263.6 350.5,350.1 351.5,437.4 352.5,334.4 353.5,266.6 354.5,382.6 355.5,428.2 356.5,303.5 357.5,281.7 358.5,410.6 359.5,407.8 360.5,279.5 361.5,306.7 362.5,429.9 363.5,379.1 364.5,265.7 365.5,338.0 366.5,437.7 367.5,346.3 368.5,264.1 369.5,371.1 370.5,433.0 371.5,314.1 372.5,275.0 373.5,401.3 374.5,416.3 375.5,287.2 376.5,296.7 377.5,424.1 378.5,390.2 379.5,269.3 380.5,326.2 381.5,436.3 382.5,358.4 383.5,263.2 384.5,359.3 385.5,436.1 386.5,325.4 387.5,269.7 388.5,391.0 389.5,423.6 390.5,296.0 391.5,287.8 392.5,416.9 393.5,400.6 394.5,274.5 395.5,314.9 396.5,433.3 397.5,370.3 398.5,264.0 399.5,347.2 400.5,437.7 401.5,337.2 402.5,265.9 403.5,380.0 404.5,429.5 405.5,306.0 406.5,280.0 407.5,408.5 408.5,409.9 409.5,281.2 410.5,304.3 411.5,428.6 412.5,381.8 413.5,266.4 414.5,335.2 415.5,437.5 416.5,349.2 417.5,263.7 418.5,368.4 419.5,433.9 420.5,316.7 421.5,273.6 422.5,398.9 423.5,418.2 424.5,289.2 425.5,294.5 426.5,422.5 427.5,392.7 428.5,270.4 429.5,323.5 430.5,435.7 431.5,361.2 432.5,263.2 433.5,356.4 434.5,436.6 435.5,328.2 436.5,268.6 437.5,388.5 438.5,425.1 439.5,298.3 440.5,285.8 441.5,415.0 442.5,402.9 443.5,276.0 444.5,312.3 445.5,432.3 446.5,373.1 447.5,264.4 448.5,344.4 449.5,437.8 450.5,340.0 451.5,265.2 452.5,377.3 453.5,430.7 454.5,308.4 455.5,278.4 456.5,406.3 457.5,412.0 458.5,283.0 459.5,301.9 460.5,427.3 461.5,384.5 462.5,267.2 463.5,332.4 464.5,437.2 465.5,352.0 466.5,263.5 467.5,365.6 468.5,434.7 469.5,319.4 470.5,272.3 471.5,396.5 472.5,419.9 473.5,291.2 474.5,292.4 475.5,420.9 476.5,395.2 477.5,271.6 478.5,320.8 479.5,435.1 480.5,364.0 481.5,263.4 482.5,353.6 483.5,437.1 484.5,330.9 485.5,267.7 486.5,385.9 487.5,426.6 488.5,300.6 489.5,283.9 490.5,413.1 491.5,405.1 492.5,277.5 493.5,309.8 494.5,431.3 495.5,375.8 496.5,264.9 497.5,341.5 498.5,437.8 499.5,342.8 500.5,264.7 501.5,374.5 502.5,431.8 503.5,311.0 504.5,276.8 505.5,404.1 506.5,414.0 507.5,284.8 508.5,299.5 509.5,425.9 510.5,387.1 511.5,268.1 512.5,329.6 513.5,436.9 514.5,354.9 515.5,263.3 516.5,362.7 517.5,435.4 518.5,322.1 519.5,271.0 520.5,394.1 521.5,421.6 522.5,293.3 523.5,290.3 524.5,419.1 525.5,397.6 526.5,272.9 527.5,318.2 528.5,434.3 529.5,366.9 530.5,263.6 531.5,350.7 532.5,437.4 533.5,333.7 534.5,266.8 535.5,383.2 536.5,427.9 537.5,303.0 538.5,282.1 539.5,411.1 540.5,407.3 541.5,279.1 542.5,307.3 543.5,430.1 544.5,378.5 545.5,265.5 546.5,338.7 547.5,437.7 548.5,345.7 549.5,264.2 550.5,371.8 551.5,432.7 552.5,313.5 553.5,275.3 554.5,401.8 555.5,415.9 556.5,286.7 557.5,297.3 558.5,424.4 559.5,389.6 560.5,269.1 561.5,326.9 562.5,436.4 563.5,357.7 564.5,263.2 565.5,359.9 566.5,436.0 567.5,324.8 568.5,269.9 569.5,391.6 570.5,423.3 571.5,295.5 572.5,288.2 573.5,417.3 574.5,400.0 575.5,274.2 576.5,315.5 577.5,433.5 578.5,369.7 579.5,263.9 580.5,347.9 581.5,437.6 582.5,336.5 583.5,266.1 584.5,380.6 585.5,429.2 586.5,305.4 587.5,280.4 588.5,409.0 589.5,409.5 590.5,280.8 591.5,304.8 592.5,428.9 593.5,381.2 594.5,266.2 595.5,335.9 596.5,437.6 597.5,348.5 598.5,263.8 599.5,369.0 600.5,433.7 601.5,316.1 602.5,273.9 603.5,399.5 604.5,417.8 605.5,288.7 606.5,295.0 607.5,422.9 608.5,392.2 609.5,270.2 610.5,324.1 611.5,435.9 612.5,360.6 613.5,263.2 614.5,357.1 615.5,436.5 616.5,327.5 617.5,268.9 618.5,389.1 619.5,424.8 620.5,297.8 621.5,286.3 622.5,415.5 623.5,402.3 624.5,275.6 625.5,312.9 626.5,432.5 627.5,372.4 628.5,264.3 629.5,345.0 630.5,437.8 631.5,339.3 632.5,265.4 633.5,377.9 634.5,430.4 635.5,307.9 636.5,278.7 637.5,406.8 638.5,411.5 639.5,282.5 640.5,302.4 641.5,427.6 642.5,383.9 643.5,267.0 644.5,333.1 645.5,437.3 646.5,351.4 647.5,263.5 648.5,366.2 649.5,434.5 650.5,318.8 651.5,272.6 652.5,397.1 653.5,419.5 654.5,290.7 655.5,292.8 656.5,421.3 657.5,394.7 658.5,271.3 659.5,321.4 660.5,435.2 661.5,363.4 662.5,263.3 663.5,354.2 664.5,437.0 665.5,330.3 666.5,267.9 667.5,386.5 668.5,426.2 669.5,300.1 670.5,284.4 671.5,413.5 672.5,404.6 673.5,277.1 674.5,310.4 675.5,431.5 676.5,375.2 677.5,264.8 678.5,342.2 679.5,437.8 680.5,342.2 681.5,264.8 682.5,375.2 683.5,431.5 684.5,310.4 685.5,277.1 686.5,404.6 687.5,413.5 688.5,284.4 689.5,300.1 690.5,426.2 691.5,386.5 692.5,267.9 693.5,330.3 694.5,437.0 695.5,354.2 696.5,263.3 697.5,363.4 698.5,435.2 699.5,321.4 700.5,271.3 701.5,394.7 702.5,421.3 703.5,292.8 704.5,290.7 705.5,419.5 706.5,397.1 707.5,272.6 708.5,318.8 709.5,434.5 710.5,366.2 711.5,263.5 712.5,351.4 713.5,437.3 714.5,333.1 715.5,267.0 716.5,383.9 717.5,427.6 718.5,302.4 719.5,282.5 720.5,411.5 721.5,406.8 722.5,278.7 723.5,307.9 724.5,430.4 725.5,377.9 726.5,265.4 727.5,339.3 728.5,437.8 729.5,345.0 730.5,264.3 731.5,372.4 732.5,432.5 733.5,312.9 734.5,275.6 735.5,402.3 736.5,415.5 737.5,286.3 738.5,297.8 739.5,424.8 740.5,389.1 741.5,268.9 742.5,327.5 743.5,436.5 744.5,357.1 745.5,263.2 746.5,360.6 747.5,435.9 748.5,324.1 749.5,270.2 750.5,392.2 751.5,422.9 752.5,295.0 753.5,288.7 754.5,417.8 755.5,399.5 756.5,273.9 757.5,316.1 758.5,433.7 759.5,369.0 760.5,263.8 761.5,348.5 762.5,437.6 763.5,335.9 764.5,266.2 765.5,381.2 766.5,428.9 767.5,304.8 768.5,280.8 769.5,409.5 770.5,409.0 771.5,280.4 772.5,305.4 773.5,429.2 774.5,380.6 775.5,266.1 776.5,336.5 777.5,437.6 778.5,347.9 779.5,263.9 780.5,369.7 781.5,433.5 782.5,315.5 783.5,274.2 784.5,400.0 785.5,417.3 786.5,288.2 787.5,295.5 788.5,423.3 789.5,391.6 790.5,269.9 791.5,324.8 792.5,436.0 793.5,359.9 794.5,263.2 795.5,357.7 796.5,436.4 797.5,326.9 798.5,269.1 799.5,389.6 800.5,424.4 801.5,297.3 802.5,286.7 803.5,415.9 804.5,401.8 805.5,275.3 806.5,313.5 807.5,432.7 808.5,371.8 809.5,264.2 810.5,345.7 811.5,437.7 812.5,338.7 813.5,265.5 814.5,378.5 815.5,430.1 816.5,307.3 817.5,279.1 818.5,407.3 819.5,411.1 820.5,282.1 821.5,303.0 822.5,427.9 823.5,383.2 824.5,266.8 825.5,333.7 826.5,437.4 827.5,350.7 828.5,263.6 829.5,366.9 830.5,434.3 831.5,318.2 832.5,272.9 833.5,397.6 834.5,419.1 835.5,290.3 836.5,293.3 837.5,421.6 838.5,394.1 839.5,271.0 840.5,322.1 841.5,435.4 842.5,362.7 843.5,263.3 844.5,354.9 845.5,436.9 846.5,329.6 847.5,268.1 848.5,387.1 849.5,425.9 850.5,299.5 851.5,284.8 852.5,414.0 853.5,404.1 854.5,276.8 855.5,311.0 856.5,431.8 857.5,374.5 858.5,264.7 859.5,342.8 860.5,437.8 861.5,341.5 862.5,264.9 863.5,375.8 864.5,431.3 865.5,309.8 866.5,277.5 867.5,405.1 868.5,413.1 869.5,283.9 870.5,300.6 871.5,426.6 872.5,385.9 873.5,267.7 874.5,330.9 875.5,437.1 876.5,353.6 877.5,263.4 878.5,364.0 879.5,435.1 880.5,320.8 881.5,271.6 882.5,395.2 883.5,420.9 884.5,292.4 885.5,291.2 886.5,419.9 887.5,396.5 888.5,272.3 889.5,319.4 890.5,434.7 891.5,365.6 892.5,263.5 893.5,352.0 894.5,437.2 895.5,332.4 896.5,267.2 897.5,384.5 898.5,427.3 899.5,301.9 900.5,283.0 901.5,412.0 902.5,406.3 903.5,278.4 904.5,308.4 905.5,430.7 906.5,377.3 907.5,265.2 908.5,340.0 909.5,437.8 910.5,344.4 911.5,264.4 912.5,373.1 913.5,432.3 914.5,312.3 915.5,276.0 916.5,402.9 917.5,415.0 918.5,285.8 919.5,298.3 920.5,425.1 921.5,388.5 922.5,268.6 923.5,328.2 924.5,436.6 925.5,356.4 926.5,263.2 927.5,361.2 928.5,435.7 929.5,323.5 930.5,270.4 931.5,392.7 932.5,422.5 933.5,294.5 934.5,289.2 935.5,418.2 936.5,398.9 937.5,273.6 938.5,316.7 939.5,433.9 940.5,368.4 941.5,263.7 942.5,349.2 943.5,437.5 944.5,335.2 945.5,266.4 946.5,381.8 947.5,428.6 948.5,304.3 949.5,281.2 950.5,409.9 951.5,408.5 952.5,280.0 953.5,306.0 954.5,429.5 955.5,380.0 956.5,265.9 957.5,337.2 958.5,437.7 959.5,347.2 960.5,264.0 961.5,370.3 962.5,433.3 963.5,314.9 964.5,274.5 965.5,400.6 966.5,416.9 967.5,287.8 968.5,296.0 969.5,423.6 970.5,391.0 971.5,269.7 972.5,325.4 973.5,436.1 974.5,359.3 975.5,263.2 976.5,358.4 977.5,436.3 978.5,326.2 979.5,269.3 980.5,390.2 981.5,424.1 982.5,296.7 983.5,287.2 984.5,416.3 985.5,401.3 986.5,275.0 987.5,314.1 988.5,433.0 989.5,371.1 990.5,264.1 991.5,346.3 992.5,437.7 993.5,338.0 994.5,265.7 995.5,379.1 996.5,429.9 997.5,306.7 998.5,279.5 999.5,407.8 1000.5,410.6 1001.5,281.7 1002.5,303.5 1003.5,428.2 1004.5,382.6 1005.5,266.6 1006.5,334.4 1007.5,437.4 1008.5,350.1 1009.5,263.6 1010.5,367.5 1011.5,434.1 1012.5,317.5 1013.5,273.2 1014.5,398.2 1015.5,418.7 1016.5,289.8 1017.5,293.8 1018.5,422.0 1019.5,393.5 1020.5,270.8 1021.5,322.7 1022.5,435.5 1023.5,362.1 1024.5,263.3 1025.5,355.5 1026.5,436.8 1027.5,329.0 1028.5,268.3 1029.5,387.7 1030.5,425.6 1031.5,299.0 1032.5,285.2 1033.5,414.4 1034.5,403.6 1035.5,276.4 1036.5,311.6 1037.5,432.0 1038.5,373.9 1039.5,264.5 1040.5,343.5 1041.5,437.8 1042.5,340.9 1043.5,265.0 1044.5,376.4 1045.5,431.0 1046.5,309.2 1047.5,277.9 1048.5,405.6 1049.5,412.6 1050.5,283.5 1051.5,301.2 1052.5,426.9 1053.5,385.3 1054.5,267.5 1055.5,331.6 1056.5,437.1 1057.5,352.9 1058.5,263.4 1059.5,364.7 1060.5,434.9 1061.5,320.2 1062.5,271.9 1063.5,395.8 1064.5,420.5 1065.5,291.9 1066.5,291.7 1067.5,420.3 1068.5,396.0 1069.5,272.0 1070.5,320.0 1071.5,434.8 1072.5,364.9 1073.5,263.4 1074.5,352.7 1075.5,437.2 1076.5,331.8 1077.5,267.4 1078.5,385.1 1079.5,427.0 1080.5,301.3 1081.5,283.4 1082.5,412.5 1083.5,405.8 1084.5,278.0 1085.5,309.0 1086.5,430.9 1087.5,376.6 1088.5,265.1 1089.5,340.6 1090.5,437.8 1091.5,343.7 1092.5,264.5 1093.5,373.7 1094.5,432.1 1095.5,311.7 1096.5,276.3 1097.5,403.4 1098.5,414.6 1099.5,285.4 1100.5,298.8 1101.5,425.5 1102.5,387.9 1103.5,268.4 1104.5,328.8 1105.5,436.7 1106.5,355.8 1107.5,263.3 1108.5,361.9 1109.5,435.6 1110.5,322.9 1111.5,270.7 1112.5,393.3 1113.5,422.1 1114.5,294.0 1115.5,289.6 1116.5,418.6 1117.5,398.4 1118.5,273.3 1119.5,317.3 1120.5,434.1 1121.5,367.7 1122.5,263.7 1123.5,349.8 1124.5,437.5 1125.5,334.6 1126.5,266.6 1127.5,382.4 1128.5,428.3 1129.5,303.7 1130.5,281.6 1131.5,410.4 1132.5,408.0 1133.5,279.6 1134.5,306.5 1135.5,429.8 1136.5,379.3 1137.5,265.7 1138.5,337.8 1139.5,437.7 1140.5,346.6 1141.5,264.1 1142.5,370.9 1143.5,433.0 1144.5,314.3 1145.5,274.9 1146.5,401.1 1147.5,416.5 1148.5,287.3 1149.5,296.6 1150.5,424.0 1151.5,390.4 1152.5,269.4 1153.5,326.0 1154.5,436.3 1155.5,358.6 1156.5,263.2 1157.5,359.0 1158.5,436.2 1159.5,325.6 1160.5,269.6 1161.5,390.8 1162.5,423.7 1163.5,296.2 1164.5,287.6 1165.5,416.8 1166.5,400.7 1167.5,274.6 1168.5,314.7 1169.5,433.2 1170.5,370.5 1171.5,264.0 1172.5,347.0 1173.5,437.7 1174.5,337.4 1175.5,265.8 1176.5,379.8 1177.5,429.6 1178.5,306.2 1179.5,279.9 1180.5,408.3 1181.5,410.1 1182.5,281.3 1183.5,304.1 1184.5,428.5 1185.5,382.0 1186.5,266.5 1187.5,335.0 1188.5,437.5 1189.5,349.4 1190.5,263.7 1191.5,368.1 1192.5,433.9 1193.5,316.9 1194.5,273.5 1195.5,398.8 1196.5,418.3 1197.5,289.3 1198.5,294.3 1199.5,422.4 1200.5,392.9 1201.5,270.5 1202.5,323.3 1203.5,435.7 1204.5,361.4 1205.5,263.2 1206.5,356.2 1207.5,436.7 1208.5,328.4 1209.5,268.5 1210.5,388.3 1211.5,425.2 1212.5,298.5 1213.5,285.7 1214.5,414.9 1215.5,403.0 1216.5,276.1 1217.5,312.1 1218.5,432.2 1219.5,373.3 1220.5,264.4 1221.5,344.1 1222.5,437.8 1223.5,340.2 1224.5,265.2 1225.5,377.1 1226.5,430.8 1227.5,308.6 1228.5,278.2 1229.5,406.1 1230.5,412.2 1231.5,283.1 1232.5,301.7 1233.5,427.2 1234.5,384.7 1235.5,267.3 1236.5,332.2 1237.5,437.2 1238.5,352.3 1239.5,263.4 1240.5,365.3 1241.5,434.7 1242.5,319.6 1243.5,272.2 1244.5,396.3 1245.5,420.1 1246.5,291.4 1247.5,292.2 1248.5,420.7 1249.5,395.4 1250.5,271.7 1251.5,320.6 1252.5,435.0 1253.5,364.3 1254.5,263.4 1255.5,353.4 1256.5,437.1 1257.5,331.1 1258.5,267.6 1259.5,385.7 1260.5,426.7 1261.5,300.8 1262.5,283.8 1263.5,412.9 1264.5,405.3 1265.5,277.6 1266.5,309.6 1267.5,431.2 1268.5,376.0 1269.5,265.0 1270.5,341.3 1271.5,437.8 1272.5,343.0 1273.5,264.6 1274.5,374.3 1275.5,431.8 1276.5,311.2 1277.5,276.7 1278.5,403.9 1279.5,414.1 1280.5,284.9 1281.5,299.4 1282.5,425.8 1283.5,387.3 1284.5,268.2 1285.5,329.4 1286.5,436.8 1287.5,355.1 1288.5,263.3 1289.5,362.5 1290.5,435.4 1291.5,322.3 1292.5,271.0 1293.5,393.9 1294.5,421.8 1295.5,293.5 1296.5,290.1 1297.5,419.0 1298.5,397.8 1299.5,273.0 1300.5,318.0 1301.5,434.2 1302.5,367.1 1303.5,263.6 1304.5,350.5 1305.5,437.4 1306.5,333.9 1307.5,266.8 1308.5,383.0 1309.5,428.0 1310.5,303.2 1311.5,282.0 1312.5,410.9 1313.5,407.5 1314.5,279.2 1315.5,307.1 1316.5,430.0 1317.5,378.7 1318.5,265.6 1319.5,338.5 1320.5,437.7 1321.5,345.9 1322.5,264.2 1323.5,371.6 1324.5,432.8 1325.5,313.7 1326.5,275.2 1327.5,401.6 1328.5,416.1 1329.5,286.9 1330.5,297.1 1331.5,424.3 1332.5,389.8 1333.5,269.2 1334.5,326.7 1335.5,436.4 1336.5,358.0 1337.5,263.2 1338.5,359.7 1339.5,436.0 1340.5,325.0 1341.5,269.8 1342.5,391.4 1343.5,423.4 1344.5,295.7 1345.5,288.1 1346.5,417.2 1347.5,400.2 1348.5,274.3 1349.5,315.3 1350.5,433.4 1351.5,369.9 1352.5,263.9 1353.5,347.6 1354.5,437.6 1355.5,336.7 1356.5,266.0 1357.5,380.4 1358.5,429.3 1359.5,305.6 1360.5,280.3 1361.5,408.8 1362.5,409.6 1363.5,280.9 1364.5,304.7 1365.5,428.8 1366.5,381.4 1367.5,266.3 1368.5,335.7 1369.5,437.6 1370.5,348.7 1371.5,263.8 1372.5,368.8 1373.5,433.7 1374.5,316.3 1375.5,273.8 1376.5,399.3 1377.5,417.9 1378.5,288.8 1379.5,294.9 1380.5,422.8 1381.5,392.4 1382.5,270.2 1383.5,323.9 1384.5,435.8 1385.5,360.8 1386.5,263.2 1387.5,356.9 1388.5,436.6 1389.5,327.7 1390.5,268.8 1391.5,388.9 1392.5,424.9 1393.5,298.0 1394.5,286.1 1395.5,415.3 1396.5,402.5 1397.5,275.8 1398.5,312.7 1399.5,432.5 1400.5,372.6 1401.5,264.3 1402.5,344.8 1403.5,437.8 1404.5,339.6 1405.5,265.3 1406.5,377.7 1407.5,430.5 1408.5,308.1 1409.5,278.6 1410.5,406.7 1411.5,411.7 1412.5,282.7 1413.5,302.2 1414.5,427.5 1415.5,384.1 1416.5,267.1 1417.5,332.9 1418.5,437.3 1419.5,351.6 1420.5,263.5 1421.5,366.0 1422.5,434.5 1423.5,319.0 1424.5,272.5 1425.5,396.9 1426.5,419.7 1427.5,290.9 1428.5,292.7 1429.5,421.1 1430.5,394.8 1431.5,271.4 1432.5,321.2 1433.5,435.2 1434.5,363.6 1435.5,263.3 1436.5,354.0 1437.5,437.0 1438.5,330.5 1439.5,267.8 1440.5,386.3 1441.5,426.4 1442.5,300.3 1443.5,284.2 1444.5,413.4 1445.5,404.8 1446.5,277.3 1447.5,310.2 1448.5,431.4 1449.5,375.4 1450.5,264.8 1451.5,342.0 1452.5,437.8 1453.5,342.4 1454.5,264.7 1455.5,375.0 1456.5,431.6 1457.5,310.6 1458.5,277.0 1459.5,404.4 1460.5,413.7 1461.5,284.5 1462.5,299.9 1463.5,426.1 1464.5,386.7 1465.5,268.0 1466.5,330.1 1467.5,436.9 1468.5,354.4 1469.5,263.3 1470.5,363.2 1471.5,435.3 1472.5,321.7 1473.5,271.2 1474.5,394.5 1475.5,421.4 1476.5,293.0 1477.5,290.6 1478.5,419.4 1479.5,397.3 1480.5,272.7 1481.5,318.6 1482.5,434.4 1483.5,366.4 1484.5,263.5 1485.5,351.2 1486.5,437.3 1487.5,333.3 1488.5,266.9 1489.5,383.7 1490.5,427.7 1491.5,302.6 1492.5,282.4 1493.5,411.4 1494.5,407.0 1495.5,278.9 1496.5,307.7 1497.5,430.3 1498.5,378.1 1499.5,265.4 1500.5,339.1 1501.5,437.7 1502.5,345.2 1503.5,264.3 1504.5,372.2 1505.5,432.6 1506.5,313.1 1507.5,275.5 1508.5,402.2 1509.5,415.6 1510.5,286.4 1511.5,297.6 1512.5,424.7 1513.5,389.3 1514.5,268.9 1515.5,327.3 1516.5,436.5 1517.5,357.3 1518.5,263.2 1519.5,360.4 1520.5,435.9 1521.5,324.4 1522.5,270.1 1523.5,392.0 1524.5,423.0 1525.5,295.2 1526.5,288.5 1527.5,417.6 1528.5,399.7 1529.5,274.0 1530.5,315.9 1531.5,433.6 1532.5,369.2 1533.5,263.8 1534.5,348.3 1535.5,437.6 1536.5,336.1 1537.5,266.2 1538.5,381.0 1539.5,429.0 1540.5,305.0 1541.5,280.7 1542.5,409.3 1543.5,409.1 1544.5,280.5 1545.5,305.2 1546.5,429.1 1547.5,380.8 1548.5,266.1 1549.5,336.3 1550.5,437.6 1551.5,348.1 1552.5,263.9 1553.5,369.4 1554.5,433.5 1555.5,315.7 1556.5,274.1 1557.5,399.8 1558.5,417.5 1559.5,288.4 1560.5,295.4 1561.5,423.1 1562.5,391.8 1563.5,270.0 1564.5,324.6 1565.5,436.0 1566.5,360.1 1567.5,263.2 1568.5,357.5 1569.5,436.5 1570.5,327.1 1571.5,269.0 1572.5,389.4 1573.5,424.6 1574.5,297.4 1575.5,286.6 1576.5,415.8 1577.5,402.0 1578.5,275.4 1579.5,313.3 1580.5,432.7 1581.5,372.0 1582.5,264.2 1583.5,345.5 1584.5,437.7 1585.5,338.9 1586.5,265.5 1587.5,378.3 1588.5,430.2 1589.5,307.5 1590.5,279.0 1591.5,407.2 1592.5,411.2 1593.5,282.3 1594.5,302.8 1595.5,427.8 1596.5,383.5 1597.5,266.9 1598.5,333.5 1599.5,437.4 1600.5,350.9 1601.5,263.6 1602.5,366.6 1603.5,434.4 1604.5,318.4 1605.5,272.8 1606.5,397.5 1607.5,419.3 1608.5,290.4 1609.5,293.2 1610.5,421.5 1611.5,394.3 1612.5,271.1 1613.5,321.9 1614.5,435.3 1615.5,363.0 1616.5,263.3 1617.5,354.7 1618.5,436.9 1619.5,329.9 1620.5,268.0 1621.5,386.9 1622.5,426.0 1623.5,299.7 1624.5,284.7 1625.5,413.8 1626.5,404.3 1627.5,276.9 1628.5,310.8 1629.5,431.7 1630.5,374.8 1631.5,264.7 1632.5,342.6 1633.5,437.8 1634.5,341.7" stroke="#ff0" stroke-width="1" fill="none"/><path d="M55 176.5h5M57.5 176v5M51 351.5h5" stroke="#ff0"/><path d="M51 345.5l4-4" stroke="#ff0" stroke-dasharray="1.2 0.8"/><path d="M54 658.5H1634M54 691.5H1634M54 725.5H1634M54 758.5H1634M54 791.5H1634M54 824.5H1634M54 857.5H1634M54 891.5H1634M54 924.5H1634M759.5 625V957" stroke="#646464" stroke-dasharray="3 3" fill="none"/><rect x="54.5" y="625.5" width="1580" height="332" stroke="#646464" fill="none"/><path d="M54 850.5H1634" stroke="#ff0" stroke-dasharray="3 3"/><polyline points="54.0,923.5 55.1,923.5 56.4,923.6 57.9,923.7 59.7,923.8 61.8,923.8 64.1,923.8 66.9,923.7 70.0,923.4 71.5,923.2 73.2,923.0 75.0,922.7 76.8,922.4 78.8,922.0 80.8,921.6 82.9,921.2 85.0,920.8 87.2,920.4 89.4,920.0 91.6,919.6 93.9,919.3 96.1,918.9 98.4,918.6 100.6,918.4 102.8,918.2 104.9,918.1 107.0,918.0 109.1,918.0 111.1,918.1 113.2,918.3 115.3,918.5 117.4,918.8 119.6,919.1 121.7,919.4 123.8,919.8 125.9,920.2 128.0,920.6 130.0,920.9 132.1,921.3 134.2,921.6 136.2,921.9 138.2,922.2 140.2,922.4 142.1,922.5 144.0,922.6 146.2,922.6 148.4,922.5 150.6,922.4 152.7,922.2 154.8,921.9 156.9,921.7 158.9,921.4 160.9,921.1 162.9,920.7 164.9,920.4 166.9,920.1 168.9,919.7 170.9,919.5 173.0,919.2 175.0,919.0 177.0,918.8 179.0,918.6 181.0,918.4 183.0,918.2 184.9,918.0 186.8,917.8 188.8,917.6 190.8,917.4 192.7,917.3 194.8,917.2 196.8,917.1 198.9,917.0 201.1,917.0 203.3,917.0 205.6,917.0 207.5,917.1 209.4,917.2 211.4,917.4 213.4,917.6 215.5,917.9 217.5,918.2 219.7,918.5 221.8,918.8 223.9,919.1 226.1,919.4 228.3,919.7 230.4,920.0 232.6,920.3 234.7,920.5 236.8,920.7 238.9,920.9 241.0,921.0 243.0,921.0 245.0,921.0 247.2,920.9 249.4,920.7 251.6,920.4 253.7,920.1 255.9,919.7 258.0,919.2 260.2,918.8 262.3,918.3 264.4,917.8 266.4,917.3 268.5,916.8 270.5,916.3 272.5,915.9 274.4,915.5 276.3,915.2 278.2,914.9 280.0,914.7 282.3,914.5 284.4,914.5 286.5,914.5 288.5,914.6 290.4,914.7 292.3,914.9 294.2,915.1 296.0,915.3 297.9,915.4 299.8,915.6 301.8,915.7 303.9,915.7 306.0,915.6 307.9,915.5 309.9,915.3 311.9,915.1 313.9,914.8 316.0,914.5 318.1,914.2 320.2,913.8 322.3,913.5 324.4,913.2 326.5,912.8 328.6,912.5 330.8,912.2 332.9,912.0 334.9,911.8 337.0,911.6 339.0,911.5 341.1,911.3 343.1,911.2 345.2,911.1 347.2,910.9 349.2,910.8 351.3,910.8 353.3,910.7 355.3,910.7 357.4,910.7 359.4,910.7 361.4,910.8 363.4,910.9 365.5,911.0 367.5,911.2 369.5,911.5 371.5,911.8 373.4,912.2 375.3,912.7 377.2,913.2 379.1,913.8 380.9,914.4 382.9,915.0 384.8,915.5 386.8,916.0 388.9,916.5 391.0,917.0 393.3,917.3 395.6,917.6 398.0,917.7 399.7,917.7 401.5,917.7 403.4,917.7 405.4,917.7 407.4,917.6 409.4,917.5 411.5,917.3 413.6,917.2 415.7,917.0 417.8,916.8 420.0,916.6 422.2,916.4 424.3,916.1 426.4,915.9 428.5,915.6 430.6,915.4 432.6,915.1 434.6,914.8 436.6,914.6 438.5,914.3 440.3,914.0 442.0,913.8 444.4,913.4 446.8,913.0 449.0,912.5 451.2,912.0 453.3,911.5 455.4,910.9 457.4,910.4 459.3,909.8 461.3,909.3 463.2,908.8 465.0,908.3 466.9,907.9 468.8,907.5 470.6,907.2 472.5,907.0 474.7,906.8 476.8,906.8 478.8,906.8 480.9,906.9 482.9,907.1 484.9,907.2 486.8,907.4 488.8,907.6 490.8,907.8 492.7,908.0 494.7,908.1 496.7,908.1 498.7,908.0 500.7,907.8 502.8,907.6 504.9,907.3 506.9,906.9 509.0,906.5 511.1,906.1 513.1,905.6 515.2,905.2 517.2,904.8 519.2,904.4 521.2,904.1 523.1,903.9 525.0,903.7 527.2,903.6 529.3,903.6 531.3,903.7 533.3,903.8 535.3,903.9 537.2,904.1 539.2,904.3 541.1,904.4 543.1,904.6 545.0,904.6 547.0,904.6 549.0,904.5 550.9,904.4 552.8,904.2 554.7,904.0 556.5,903.8 558.5,903.5 560.4,903.3 562.4,903.0 564.5,902.8 566.7,902.6 569.0,902.4 570.8,902.3 572.7,902.1 574.6,902.0 576.7,901.8 578.8,901.7 580.9,901.5 583.0,901.4 585.2,901.3 587.3,901.1 589.4,901.0 591.5,900.9 593.5,900.8 595.4,900.8 597.3,900.7 599.0,900.7 601.4,900.7 603.8,900.8 605.9,900.9 608.0,901.0 610.0,901.2 612.0,901.4 613.9,901.5 615.7,901.7 617.6,901.9 619.4,902.0 621.7,902.1 623.9,902.3 626.0,902.4 628.1,902.6 630.1,902.7 632.1,902.8 634.1,902.9 636.0,903.0 638.2,903.1 640.3,903.1 642.3,903.2 644.3,903.2 646.3,903.2 648.2,903.1 650.0,903.0 652.3,902.7 654.3,902.4 656.3,901.9 658.5,901.3 661.0,900.5 662.9,899.8 664.9,899.0 667.2,898.0 669.4,897.0 671.7,896.0 673.9,895.1 676.0,894.3 677.8,893.6 680.5,892.9 683.0,892.4 685.2,892.1 687.0,891.9 688.3,891.7 689.3,878.0 691.0,860.0 692.1,851.4 693.3,842.5 694.6,833.7 695.8,825.5 696.9,818.0 697.8,811.0 698.9,804.4 700.0,798.0 701.0,793.4 702.0,789.2 703.1,785.1 704.3,780.7 705.6,775.6 706.5,771.9 707.5,767.7 708.5,763.3 709.6,758.8 710.7,754.2 711.8,749.8 712.9,745.7 713.9,742.0 714.9,738.7 715.9,735.8 716.8,733.0 717.8,730.5 718.8,728.0 719.8,725.4 720.9,722.8 722.0,720.0 722.9,717.8 723.8,715.5 724.8,713.1 725.8,710.7 726.8,708.3 727.8,705.9 728.8,703.5 729.9,701.2 730.9,699.0 732.0,696.9 733.0,695.0 734.0,693.2 735.1,691.5 736.2,689.9 737.3,688.3 738.4,686.8 739.5,685.5 740.5,684.1 741.6,682.9 742.6,681.8 743.5,680.7 744.4,679.7 745.7,678.3 746.8,677.3 747.9,676.4 748.9,675.7 749.9,675.1 750.9,674.5 752.0,674.0 753.1,673.5 754.1,673.0 755.2,672.7 756.3,672.4 757.4,672.2 758.5,672.0 759.7,672.0 760.7,672.0 761.6,671.9 762.6,671.9 763.7,671.9 764.7,672.0 765.8,672.2 766.9,672.6 768.1,673.2 769.4,674.0 770.3,674.7 771.3,675.6 772.3,676.6 773.4,677.6 774.5,678.8 775.6,680.0 776.7,681.2 777.8,682.6 778.9,683.9 780.0,685.3 781.0,686.7 782.0,688.0 783.0,689.4 784.1,691.0 785.2,692.6 786.2,694.2 787.2,695.9 788.1,697.6 789.1,699.3 790.1,701.1 791.0,703.0 792.0,704.9 793.0,706.9 794.0,709.0 795.0,711.2 796.1,713.5 797.2,715.8 798.3,718.2 799.4,720.7 800.4,723.3 801.5,725.9 802.6,728.5 803.6,731.2 804.6,733.9 805.5,736.7 806.7,740.6 807.9,744.7 809.0,748.9 810.1,753.2 811.2,757.5 812.2,761.7 813.1,765.9 814.0,770.0 815.3,776.0 816.4,781.5 817.5,787.0 818.4,793.2 819.4,800.5 820.5,811.8 821.6,824.8 822.6,838.1 823.6,850.5 824.7,862.4 826.0,874.4 827.0,884.7 827.8,892.0 829.1,892.2 831.0,892.5 833.3,893.0 836.0,893.6 837.7,894.1 839.5,894.6 841.5,895.2 843.5,895.8 845.6,896.5 847.8,897.1 850.0,897.8 852.0,898.4 854.1,899.2 856.3,899.9 858.5,900.7 860.7,901.4 862.9,902.1 864.9,902.6 866.7,903.0 869.1,903.3 871.0,903.3 872.8,903.1 875.0,902.9 877.8,902.8 879.4,902.8 881.0,902.8 882.8,902.9 884.6,902.9 886.6,903.0 888.6,903.0 890.7,903.1 892.9,903.1 895.2,903.0 897.6,902.9 900.0,902.8 901.7,902.7 903.5,902.4 905.4,902.2 907.2,901.9 909.2,901.6 911.2,901.3 913.2,900.9 915.2,900.6 917.3,900.2 919.3,899.9 921.4,899.6 923.6,899.4 925.7,899.2 927.8,899.1 929.9,899.0 932.0,899.0 934.0,899.1 936.0,899.2 938.1,899.5 940.1,899.8 942.2,900.1 944.3,900.4 946.4,900.8 948.5,901.3 950.7,901.7 952.8,902.1 954.9,902.5 956.9,902.9 959.0,903.3 961.1,903.6 963.1,903.9 965.1,904.1 967.0,904.3 969.2,904.4 971.3,904.4 973.5,904.4 975.6,904.3 977.7,904.2 979.7,904.1 981.8,903.9 983.8,903.8 985.8,903.6 987.8,903.5 989.8,903.4 991.7,903.3 993.7,903.3 995.6,903.3 997.5,903.4 999.7,903.6 1001.8,903.9 1003.9,904.3 1006.0,904.8 1008.1,905.3 1010.1,905.8 1012.1,906.3 1014.1,906.8 1016.1,907.3 1018.0,907.8 1019.9,908.2 1021.8,908.5 1023.7,908.7 1026.0,908.8 1028.1,908.8 1030.2,908.6 1032.1,908.3 1034.1,908.0 1036.1,907.8 1038.2,907.6 1040.5,907.5 1042.9,907.5 1045.6,907.8 1047.3,908.1 1049.1,908.4 1051.0,908.8 1053.0,909.3 1055.0,909.8 1057.1,910.4 1059.2,911.0 1061.3,911.6 1063.5,912.2 1065.7,912.9 1067.9,913.5 1070.1,914.1 1072.2,914.7 1074.4,915.2 1076.5,915.8 1078.6,916.2 1080.6,916.6 1082.7,917.0 1084.8,917.3 1086.9,917.7 1089.0,918.0 1091.0,918.4 1093.1,918.7 1095.1,918.9 1097.2,919.2 1099.2,919.4 1101.2,919.6 1103.2,919.8 1105.3,919.9 1107.3,920.0 1109.3,920.0 1111.4,920.0 1113.4,920.0 1115.4,919.9 1117.5,919.7 1119.5,919.5 1121.5,919.1 1123.5,918.8 1125.5,918.4 1127.5,918.0 1129.6,917.5 1131.6,917.1 1133.6,916.6 1135.6,916.2 1137.7,915.7 1139.7,915.3 1141.8,915.0 1143.9,914.7 1146.0,914.4 1148.0,914.2 1150.0,914.0 1152.0,913.8 1154.1,913.7 1156.1,913.5 1158.2,913.4 1160.2,913.3 1162.3,913.1 1164.4,913.0 1166.5,913.0 1168.6,912.9 1170.6,912.8 1172.7,912.8 1174.8,912.7 1176.9,912.7 1178.9,912.6 1181.0,912.6 1183.1,912.6 1185.1,912.6 1187.2,912.5 1189.2,912.5 1191.3,912.5 1193.4,912.5 1195.4,912.6 1197.5,912.6 1199.5,912.6 1201.6,912.7 1203.6,912.8 1205.7,912.8 1207.8,912.9 1209.8,913.0 1211.9,913.2 1213.9,913.3 1216.0,913.5 1218.0,913.7 1220.1,914.0 1222.1,914.2 1224.0,914.6 1226.0,914.9 1228.0,915.3 1230.0,915.7 1231.9,916.0 1233.9,916.4 1235.9,916.8 1238.0,917.2 1240.0,917.5 1242.1,917.8 1244.3,918.1 1246.5,918.4 1248.7,918.6 1251.0,918.7 1252.8,918.8 1254.7,918.8 1256.6,918.8 1258.6,918.8 1260.7,918.7 1262.7,918.7 1264.8,918.6 1266.9,918.5 1269.0,918.4 1271.1,918.2 1273.3,918.1 1275.4,918.0 1277.5,917.8 1279.6,917.7 1281.7,917.6 1283.7,917.5 1285.7,917.4 1287.7,917.4 1289.6,917.3 1291.5,917.3 1293.3,917.3 1295.0,917.4 1297.4,917.5 1299.8,917.7 1302.0,918.0 1304.1,918.3 1306.2,918.6 1308.2,919.0 1310.2,919.3 1312.1,919.7 1314.0,920.1 1315.9,920.4 1317.8,920.8 1319.7,921.1 1321.6,921.4 1323.6,921.6 1325.6,921.8 1327.6,921.9 1329.6,922.0 1331.5,922.1 1333.4,922.2 1335.2,922.2 1337.1,922.3 1339.0,922.3 1340.9,922.3 1342.9,922.2 1344.9,922.2 1346.9,922.1 1349.1,922.1 1351.3,922.0 1353.6,921.9 1356.0,921.8 1357.7,921.7 1359.6,921.6 1361.5,921.5 1363.5,921.3 1365.5,921.2 1367.6,921.0 1369.8,920.8 1371.9,920.6 1374.1,920.4 1376.3,920.3 1378.5,920.1 1380.7,919.9 1382.9,919.7 1385.1,919.5 1387.2,919.3 1389.2,919.2 1391.2,919.0 1393.2,918.9 1395.0,918.8 1396.8,918.8 1398.4,918.7 1400.0,918.7 1403.0,918.8 1405.6,918.9 1407.8,919.2 1409.7,919.5 1411.5,919.8 1413.2,920.2 1415.0,920.6 1417.0,921.1 1419.2,921.4 1421.8,921.8 1423.5,922.0 1425.3,922.2 1427.2,922.5 1429.2,922.7 1431.3,923.0 1433.4,923.3 1435.5,923.6 1437.7,923.8 1439.8,924.1 1442.0,924.3 1444.2,924.6 1446.4,924.8 1448.6,924.9 1450.7,925.1 1452.8,925.2 1454.8,925.3 1456.8,925.3 1459.0,925.3 1461.1,925.2 1463.1,925.0 1465.2,924.8 1467.2,924.5 1469.2,924.2 1471.2,923.9 1473.1,923.6 1475.1,923.3 1477.1,923.0 1479.1,922.7 1481.2,922.4 1483.2,922.1 1485.3,921.9 1487.5,921.8 1489.4,921.7 1491.4,921.6 1493.4,921.5 1495.4,921.5 1497.5,921.4 1499.5,921.4 1501.6,921.4 1503.7,921.4 1505.8,921.4 1507.9,921.4 1510.0,921.4 1512.1,921.4 1514.2,921.5 1516.3,921.5 1518.4,921.6 1520.4,921.7 1522.5,921.8 1524.6,921.9 1526.7,922.1 1528.8,922.3 1530.9,922.5 1533.1,922.7 1535.2,923.0 1537.3,923.3 1539.5,923.6 1541.6,923.8 1543.7,924.1 1545.8,924.3 1547.8,924.6 1549.9,924.8 1551.8,925.0 1553.8,925.1 1555.7,925.2 1557.5,925.3 1559.8,925.3 1562.0,925.2 1564.2,925.1 1566.2,924.8 1568.3,924.6 1570.2,924.3 1572.2,924.0 1574.1,923.8 1576.0,923.5 1577.9,923.3 1579.8,923.2 1581.8,923.1 1583.8,923.1 1585.8,923.2 1587.9,923.4 1589.9,923.7 1591.9,924.1 1594.0,924.5 1596.0,924.9 1598.1,925.4 1600.1,925.8 1602.1,926.2 1604.1,926.5 1606.1,926.8 1608.1,926.9 1610.0,927.0 1612.2,926.9 1614.4,926.7 1616.7,926.5 1619.1,926.1 1621.4,925.7 1623.6,925.2 1625.8,924.8 1627.9,924.3 1629.7,923.9 1631.4,923.5 1632.8,923.2 1634.0,923.0" stroke="#ff0" stroke-width="1" fill="none"/><circle cx="759.5" cy="663.5" r="3" stroke="#ff0" fill="none" shape-rendering="auto"/><path d="M759.5 666V672" stroke="#ff0"/><path d="M1615 179h5v1h-5ZM1623 179h5v1h-5ZM1630 179h3v1h-3ZM1615 181h6v1h-6ZM1623 181h5v1h-5ZM1630 181h3v1h-3ZM1615 183h3v1h-3ZM1619 183h2v1h-2ZM1622 183h3v1h-3ZM1626 183h2v1h-2ZM1630 183h3v1h-3ZM1615 185h3v5h-3ZM1625 185h3v5h-3ZM1630 185h3v5h-3ZM1619 185h5l-1.2 5h-2.6Z" fill="#ff0"/><path d="M1614 629h5v1h-5ZM1622 629h5v1h-5ZM1629 629h3v1h-3ZM1614 631h6v1h-6ZM1622 631h5v1h-5ZM1629 631h3v1h-3ZM1614 633h3v1h-3ZM1618 633h2v1h-2ZM1621 633h3v1h-3ZM1625 633h2v1h-2ZM1629 633h3v1h-3ZM1614 635h3v5h-3ZM1624 635h3v5h-3ZM1629 635h3v5h-3ZM1618 635h5l-1.2 5h-2.6Z" fill="#ff0"/></svg>
<div class="t pm" style="left:19.0px;top:149px;color:#ff0">A (V)</div>
<div class="t pm" style="left:549.4px;top:149px;color:#ff0">A: Max=   997.6687 mV  Min=  -997.6672 mV  Mean=        0.27 μV  RMS=   706.05603 mV</div>
<div class="t pm" style="left:45.0px;top:169px;color:#ff0">2</div>
<div class="t pm" style="left:31.0px;top:204px;color:#ff0">1.6</div>
<div class="t pm" style="left:31.0px;top:239px;color:#ff0">1.2</div>
<div class="t pm" style="left:31.0px;top:274px;color:#ff0">0.8</div>
<div class="t pm" style="left:31.0px;top:309px;color:#ff0">0.4</div>
<div class="t pm" style="left:45.0px;top:344px;color:#ff0">0</div>
<div class="t pm" style="left:24.0px;top:379px;color:#ff0">-0.4</div>
<div class="t pm" style="left:24.0px;top:414px;color:#ff0">-0.8</div>
<div class="t pm" style="left:24.0px;top:449px;color:#ff0">-1.2</div>
<div class="t pm" style="left:24.0px;top:484px;color:#ff0">-1.6</div>
<div class="t pm" style="left:38.0px;top:520px;color:#ff0">-2</div>
<div class="t pm" style="left:51.0px;top:529px;color:#fff">0</div>
<div class="t pm" style="left:202.0px;top:529px;color:#fff">0.2</div>
<div class="t pm" style="left:360.0px;top:529px;color:#fff">0.4</div>
<div class="t pm" style="left:518.0px;top:529px;color:#fff">0.6</div>
<div class="t pm" style="left:676.0px;top:529px;color:#fff">0.8</div>
<div class="t pm" style="left:841.0px;top:529px;color:#fff">1</div>
<div class="t pm" style="left:992.0px;top:529px;color:#fff">1.2</div>
<div class="t pm" style="left:1150.0px;top:529px;color:#fff">1.4</div>
<div class="t pm" style="left:1308.0px;top:529px;color:#fff">1.6</div>
<div class="t pm" style="left:1466.0px;top:529px;color:#fff">1.8</div>
<div class="t pm" style="left:1631.0px;top:529px;color:#fff">2</div>
<div class="t pm" style="left:1641.0px;top:542px;color:#fff">s</div>
<div class="t pm" style="left:12.0px;top:540px;color:#fff">+05:18:36:463</div>
<div class="t pm" style="left:816.5px;top:540px;color:#fff">WAVEFORM</div>
<div class="t pm" style="left:12.0px;top:599px;color:#ff0">A(dBV)</div>
<div class="t pm" style="left:351.0px;top:599px;color:#ff0">A: Peak Frequency= 1.000016 kHz  THD=  0.0001 % (-118.12 dB)  THD+N=  0.0003 % (-110.87 dB)  SINAD= 110.87 dB  SNR= 111.77 dB  NL=-114.80 dBV</div>
<div class="t pm" style="left:38.0px;top:619px;color:#ff0">20</div>
<div class="t pm" style="left:45.0px;top:652px;color:#ff0">0</div>
<div class="t pm" style="left:31.0px;top:685px;color:#ff0">-20</div>
<div class="t pm" style="left:31.0px;top:719px;color:#ff0">-40</div>
<div class="t pm" style="left:31.0px;top:752px;color:#ff0">-60</div>
<div class="t pm" style="left:31.0px;top:785px;color:#ff0">-80</div>
<div class="t pm" style="left:24.0px;top:818px;color:#ff0">-100</div>
<div class="t pm" style="left:24.0px;top:851px;color:#ff0">-120</div>
<div class="t pm" style="left:24.0px;top:885px;color:#ff0">-140</div>
<div class="t pm" style="left:24.0px;top:918px;color:#ff0">-160</div>
<div class="t pm" style="left:24.0px;top:951px;color:#ff0">-180</div>
<div class="t pm" style="left:752.5px;top:961px;color:#fff">1k</div>
<div class="t pm" style="left:715.0px;top:972px;color:#fff">AMPLITUDE SPECTRUM in dBV (Vr=1 Vrms)</div>
<div class="t pm" style="left:12.0px;top:972px;color:#fff">FFT Segments:&lt;1     Resolution: 0.366211Hz</div>
<div class="t pm" style="left:1466.0px;top:972px;color:#fff">Averaged Frames: 10</div>
<div class="t pm" style="left:1642.0px;top:974px;color:#fff">Hz</div>
<div style="left:1672px;top:116px;width:248px;height:898px;background:#ababab"></div>
<div style="left:1680px;top:123px;width:232px;height:156px;box-shadow:0 0 6px 3px rgba(60,60,60,0.45);background:#000"></div>
<div style="left:1680px;top:123px;width:232px;height:30px;background:#fff"></div>
<svg style="left:1689px;top:129px" width="16" height="18"><path d="M0.75 1.75h2.2l1.3 1.2v3.3l-1.3 1h-2.2Z" stroke="#0000ff" stroke-width="1.25" fill="none"/><path d="M5.75 1.75h2.2l1.3 1.2v3.3l-1.3 1h-2.2Z" stroke="#ff0000" stroke-width="1.25" fill="none"/><path d="M10.75 8V1.75h2.5l1.1 1v1.6l-1.1 1h-2.5" stroke="#00f000" stroke-width="1.25" fill="none"/><circle cx="7.5" cy="12.5" r="3.2" stroke="#000" stroke-width="1.3" fill="none"/><path d="M6 12.5h3M7.5 11v3" stroke="#000" stroke-width="1.2"/><path d="M9.8 14.8l2.5 2.5" stroke="#000" stroke-width="1.3"/></svg>
<div class="t ui" style="left:1709px;top:132px;color:#8c8c8c;font-size:12px;letter-spacing:-0.35px">THD (Ch. A)</div>
<div style="left:1792px;top:137px;width:11px;height:1px;background:#555"></div>
<svg style="left:1838px;top:132px" width="11" height="11"><rect x="0.5" y="0.5" width="10" height="10" fill="none" stroke="#555"/></svg>
<svg style="left:1884px;top:132px" width="11" height="11"><path d="M0.5 0.5L10.5 10.5M10.5 0.5L0.5 10.5" stroke="#555" stroke-width="1"/></svg>
<div class="t" style="left:1687.8px;top:168px;font-family:'Liberation Mono';font-weight:bold;font-size:102px;color:#ff0;letter-spacing:6.86px;transform:scaleX(0.3673);transform-origin:0 0">0.00012 %</div>
<div style="left:1696.8px;top:204.7px;width:5.1px;height:14.3px;background:#000"></div>
<div style="left:1746.8px;top:204.7px;width:5.1px;height:14.3px;background:#000"></div>
<div style="left:1771.8px;top:204.7px;width:5.1px;height:14.3px;background:#000"></div>
<div style="left:1796.8px;top:204.7px;width:5.1px;height:14.3px;background:#000"></div>
<div style="left:1680px;top:289px;width:232px;height:156px;box-shadow:0 0 6px 3px rgba(60,60,60,0.45);background:#000"></div>
<div style="left:1680px;top:289px;width:232px;height:30px;background:#fff"></div>
<svg style="left:1689px;top:295px" width="16" height="18"><path d="M0.75 1.75h2.2l1.3 1.2v3.3l-1.3 1h-2.2Z" stroke="#0000ff" stroke-width="1.25" fill="none"/><path d="M5.75 1.75h2.2l1.3 1.2v3.3l-1.3 1h-2.2Z" stroke="#ff0000" stroke-width="1.25" fill="none"/><path d="M10.75 8V1.75h2.5l1.1 1v1.6l-1.1 1h-2.5" stroke="#00f000" stroke-width="1.25" fill="none"/><circle cx="7.5" cy="12.5" r="3.2" stroke="#000" stroke-width="1.3" fill="none"/><path d="M6 12.5h3M7.5 11v3" stroke="#000" stroke-width="1.2"/><path d="M9.8 14.8l2.5 2.5" stroke="#000" stroke-width="1.3"/></svg>
<div class="t ui" style="left:1709px;top:298px;color:#8c8c8c;font-size:12px;letter-spacing:-0.35px">THD+N (...</div>
<div style="left:1792px;top:303px;width:11px;height:1px;background:#555"></div>
<svg style="left:1838px;top:298px" width="11" height="11"><rect x="0.5" y="0.5" width="10" height="10" fill="none" stroke="#555"/></svg>
<svg style="left:1884px;top:298px" width="11" height="11"><path d="M0.5 0.5L10.5 10.5M10.5 0.5L0.5 10.5" stroke="#555" stroke-width="1"/></svg>
<div class="t" style="left:1705.9px;top:334px;font-family:'Liberation Mono';font-weight:bold;font-size:102px;color:#ff0;letter-spacing:5.09px;transform:scaleX(0.3469);transform-origin:0 0">0.00029 %</div>
<div style="left:1714.4px;top:370.7px;width:4.8px;height:14.3px;background:#000"></div>
<div style="left:1760.4px;top:370.7px;width:4.8px;height:14.3px;background:#000"></div>
<div style="left:1783.4px;top:370.7px;width:4.8px;height:14.3px;background:#000"></div>
<div style="left:1806.4px;top:370.7px;width:4.8px;height:14.3px;background:#000"></div>
<div style="left:1680px;top:455px;width:232px;height:156px;box-shadow:0 0 6px 3px rgba(60,60,60,0.45);background:#000"></div>
<div style="left:1680px;top:455px;width:232px;height:30px;background:#fff"></div>
<svg style="left:1689px;top:461px" width="16" height="18"><path d="M0.75 1.75h2.2l1.3 1.2v3.3l-1.3 1h-2.2Z" stroke="#0000ff" stroke-width="1.25" fill="none"/><path d="M5.75 1.75h2.2l1.3 1.2v3.3l-1.3 1h-2.2Z" stroke="#ff0000" stroke-width="1.25" fill="none"/><path d="M10.75 8V1.75h2.5l1.1 1v1.6l-1.1 1h-2.5" stroke="#00f000" stroke-width="1.25" fill="none"/><circle cx="7.5" cy="12.5" r="3.2" stroke="#000" stroke-width="1.3" fill="none"/><path d="M6 12.5h3M7.5 11v3" stroke="#000" stroke-width="1.2"/><path d="M9.8 14.8l2.5 2.5" stroke="#000" stroke-width="1.3"/></svg>
<div class="t ui" style="left:1709px;top:464px;color:#8c8c8c;font-size:12px;letter-spacing:-0.35px">SNR (Ch. A)</div>
<div style="left:1792px;top:469px;width:11px;height:1px;background:#555"></div>
<svg style="left:1838px;top:464px" width="11" height="11"><rect x="0.5" y="0.5" width="10" height="10" fill="none" stroke="#555"/></svg>
<svg style="left:1884px;top:464px" width="11" height="11"><path d="M0.5 0.5L10.5 10.5M10.5 0.5L0.5 10.5" stroke="#555" stroke-width="1"/></svg>
<div class="t" style="left:1687.8px;top:500px;font-family:'Liberation Mono';font-weight:bold;font-size:102px;color:#ff0;letter-spacing:6.86px;transform:scaleX(0.3673);transform-origin:0 0">111.77 dB</div>
<div style="left:1680px;top:621px;width:232px;height:156px;box-shadow:0 0 6px 3px rgba(60,60,60,0.45);background:#000"></div>
<div style="left:1680px;top:621px;width:232px;height:30px;background:#fff"></div>
<svg style="left:1689px;top:627px" width="16" height="18"><path d="M0.75 1.75h2.2l1.3 1.2v3.3l-1.3 1h-2.2Z" stroke="#0000ff" stroke-width="1.25" fill="none"/><path d="M5.75 1.75h2.2l1.3 1.2v3.3l-1.3 1h-2.2Z" stroke="#ff0000" stroke-width="1.25" fill="none"/><path d="M10.75 8V1.75h2.5l1.1 1v1.6l-1.1 1h-2.5" stroke="#00f000" stroke-width="1.25" fill="none"/><circle cx="7.5" cy="12.5" r="3.2" stroke="#000" stroke-width="1.3" fill="none"/><path d="M6 12.5h3M7.5 11v3" stroke="#000" stroke-width="1.2"/><path d="M9.8 14.8l2.5 2.5" stroke="#000" stroke-width="1.3"/></svg>
<div class="t ui" style="left:1709px;top:630px;color:#8c8c8c;font-size:12px;letter-spacing:-0.35px">SINAD (C...</div>
<div style="left:1792px;top:635px;width:11px;height:1px;background:#555"></div>
<svg style="left:1838px;top:630px" width="11" height="11"><rect x="0.5" y="0.5" width="10" height="10" fill="none" stroke="#555"/></svg>
<svg style="left:1884px;top:630px" width="11" height="11"><path d="M0.5 0.5L10.5 10.5M10.5 0.5L0.5 10.5" stroke="#555" stroke-width="1"/></svg>
<div class="t" style="left:1687.8px;top:666px;font-family:'Liberation Mono';font-weight:bold;font-size:102px;color:#ff0;letter-spacing:6.86px;transform:scaleX(0.3673);transform-origin:0 0">110.87 dB</div>
<div style="left:1746.8px;top:702.7px;width:5.1px;height:14.3px;background:#000"></div>
<div style="left:1680px;top:787px;width:232px;height:156px;box-shadow:0 0 6px 3px rgba(60,60,60,0.45);background:#000"></div>
<div style="left:1680px;top:787px;width:232px;height:30px;background:#fff"></div>
<svg style="left:1689px;top:793px" width="16" height="18"><path d="M0.75 1.75h2.2l1.3 1.2v3.3l-1.3 1h-2.2Z" stroke="#0000ff" stroke-width="1.25" fill="none"/><path d="M5.75 1.75h2.2l1.3 1.2v3.3l-1.3 1h-2.2Z" stroke="#ff0000" stroke-width="1.25" fill="none"/><path d="M10.75 8V1.75h2.5l1.1 1v1.6l-1.1 1h-2.5" stroke="#00f000" stroke-width="1.25" fill="none"/><circle cx="7.5" cy="12.5" r="3.2" stroke="#000" stroke-width="1.3" fill="none"/><path d="M6 12.5h3M7.5 11v3" stroke="#000" stroke-width="1.2"/><path d="M9.8 14.8l2.5 2.5" stroke="#000" stroke-width="1.3"/></svg>
<div class="t ui" style="left:1709px;top:796px;color:#8c8c8c;font-size:12px;letter-spacing:-0.35px">ENOB (Ch...</div>
<div style="left:1792px;top:801px;width:11px;height:1px;background:#555"></div>
<svg style="left:1838px;top:796px" width="11" height="11"><rect x="0.5" y="0.5" width="10" height="10" fill="none" stroke="#555"/></svg>
<svg style="left:1884px;top:796px" width="11" height="11"><path d="M0.5 0.5L10.5 10.5M10.5 0.5L0.5 10.5" stroke="#555" stroke-width="1"/></svg>
<div class="t" style="left:1687.8px;top:832px;font-family:'Liberation Mono';font-weight:bold;font-size:102px;color:#ff0;letter-spacing:6.86px;transform:scaleX(0.3673);transform-origin:0 0">18.12 Bit</div>
<div style="left:1675px;top:952px;width:243px;height:55px;box-shadow:0 0 6px 3px rgba(60,60,60,0.45);background:#f0f0f0"></div>
<div style="left:1675px;top:952px;width:243px;height:25px;background:#fff"></div>
<svg style="left:1678px;top:956px" width="16" height="16"><rect width="16" height="16" fill="#ff0"/><path d="M0 4V1h3v3h3V1h3v3h3V1h3v3" stroke="#f00" fill="none" stroke-width="1"/><path d="M0 9V6h3v3h3V6h3v3h3V6h3v3" stroke="#0c0" fill="none" stroke-width="1"/><path d="M0 15l2.5-3 2.5 3 2.5-3 2.5 3 2.5-3 2.5 3" stroke="#00f" fill="none" stroke-width="1"/></svg>
<div class="t ui" style="left:1699px;top:958px;color:#8c8c8c;font-size:12px;letter-spacing:-0.3px">Signal Gener...</div>
<div style="left:1798px;top:964px;width:11px;height:1px;background:#555"></div>
<svg style="left:1843px;top:959px" width="11" height="11"><rect x="0.5" y="0.5" width="10" height="10" fill="none" stroke="#c8c8c8"/></svg>
<svg style="left:1889px;top:959px" width="11" height="11"><path d="M0.5 0.5L10.5 10.5M10.5 0.5L0.5 10.5" stroke="#555" stroke-width="1"/></svg>
<div style="left:1680px;top:985px;width:12px;height:12px;border:1px solid #333;background:#fff"></div>
<div class="t ui" style="left:1698px;top:987px;font-size:12px;letter-spacing:-0.6px">Show Editor</div>
<div style="left:1761px;top:982px;width:126px;height:20px;box-shadow:inset 1px 1px #a0a0a0,inset -1px -1px #fff,inset 2px 2px #696969,inset -2px -2px #e3e3e3;background:#fff"></div>
<div style="left:1868px;top:984px;width:17px;height:16px;box-shadow:inset -1px -1px #696969,inset 1px 1px #fff,inset -2px -2px #a0a0a0,inset 2px 2px #e3e3e3;background:#f0f0f0;"></div>
<svg style="left:1872px;top:990px" width="9" height="5"><path d="M0 0H9L4.5 5Z" fill="#000"/></svg>
<div class="t ui" style="left:1765px;top:987px;font-size:12px;letter-spacing:-0.6px">No Loopback</div>
<div style="left:1890px;top:980px;width:24px;height:23px;box-shadow:inset -1px -1px #696969,inset 1px 1px #fff,inset -2px -2px #a0a0a0,inset 2px 2px #e3e3e3;background:#f0f0f0;"></div>
<div style="left:1897px;top:986px;width:10px;height:10px;background:#00e000"></div>
<div style="left:1134px;top:634px;width:384px;height:112px;background:#000;border:1px solid #646464;border-top:none"></div>
<div style="left:1134px;top:634px;width:384px;height:30px;background:#fff"></div>
<svg style="left:1142px;top:640px" width="16" height="18"><path d="M0.75 1.75h2.2l1.3 1.2v3.3l-1.3 1h-2.2Z" stroke="#0000ff" stroke-width="1.25" fill="none"/><path d="M5.75 1.75h2.2l1.3 1.2v3.3l-1.3 1h-2.2Z" stroke="#ff0000" stroke-width="1.25" fill="none"/><path d="M10.75 8V1.75h2.5l1.1 1v1.6l-1.1 1h-2.5" stroke="#00f000" stroke-width="1.25" fill="none"/><circle cx="7.5" cy="12.5" r="3.2" stroke="#000" stroke-width="1.3" fill="none"/><path d="M6 12.5h3M7.5 11v3" stroke="#000" stroke-width="1.2"/><path d="M9.8 14.8l2.5 2.5" stroke="#000" stroke-width="1.3"/></svg>
<div class="t ui" style="left:1163px;top:643px;color:#8c8c8c;font-size:12px">f1RMS_A</div>
<div style="left:1398px;top:648px;width:11px;height:1px;background:#555"></div>
<svg style="left:1443px;top:643px" width="11" height="11"><rect x="0.5" y="0.5" width="10" height="10" fill="none" stroke="#555"/></svg>
<svg style="left:1489px;top:643px" width="11" height="11"><path d="M0.5 0.5L10.5 10.5M10.5 0.5L0.5 10.5" stroke="#555" stroke-width="1"/></svg>
<div style="left:1134px;top:664px;width:384px;height:81px;overflow:hidden"><div class="t" style="left:41.7px;top:9.6px;font-family:'Liberation Mono';font-weight:bold;font-size:66px;color:#ff0;transform:scaleX(0.957);transform-origin:0 0"> 3.02 dBV</div><div style="left:170.6px;top:33.4px;width:8.2px;height:9.2px;background:#000"></div><div style="left:46px;top:38px;width:29px;height:6px;background:#ff0"></div></div>
<div style="left:0px;top:1040px;width:1920px;height:40px;background:#0a0a0a"></div>
<svg style="left:16px;top:1052px" width="17" height="17"><path d="M0 2.3L6.8 1.4V7.9H0ZM7.7 1.3L16.5 0V7.9H7.7ZM0 8.8H6.8V15.4L0 14.5ZM7.7 8.8H16.5V16.8L7.7 15.6Z" fill="#fff"/></svg>
<svg style="left:63px;top:1051px" width="19" height="19"><circle cx="11.5" cy="7" r="5.5" stroke="#fff" stroke-width="1.2" fill="none"/><path d="M7.5 11L1 17.5" stroke="#fff" stroke-width="1.3"/></svg>
<svg style="left:111px;top:1051px" width="18" height="18"><path d="M0.5 1.5h10M0.5 15.5h10M2 3.5v10M9 3.5v10M0.5 3.5h10M0.5 13.5h10" stroke="#fff" stroke-width="1.1" fill="none"/><path d="M14.5 0v5M14.5 9v8" stroke="#fff" stroke-width="1.2"/><rect x="13" y="5.5" width="3" height="3" fill="#fff"/></svg>
<div style="left:150px;top:1052px;width:1px;height:16px;background:#555"></div>
<div style="left:153px;top:1052px;width:1px;height:16px;background:#555"></div>
<svg style="left:179px;top:1047px" width="24" height="24"><path d="M7 6V4c0-3 3-4 5-4s5 1 5 4v2" stroke="#fff" stroke-width="1.3" fill="none"/><rect x="0" y="6" width="23" height="17" rx="1.5" fill="#fff"/><rect x="6" y="9" width="5" height="5" fill="#f25022"/><rect x="12" y="9" width="5" height="5" fill="#7fba00"/><rect x="6" y="15" width="5" height="5" fill="#00a4ef"/><rect x="12" y="15" width="5" height="5" fill="#ffb900"/></svg>
<svg style="left:228px;top:1048px" width="22" height="22"><rect x="0.5" y="0.5" width="21" height="21" rx="2" fill="#9ec3ef" stroke="#1d5bb8"/><rect x="1" y="13" width="20" height="8" fill="#f4f4f4"/><path d="M12 11l10 3-2 7-9-2Z" fill="#fff" stroke="#1d5bb8" stroke-width="0.5"/><text x="2" y="15" font-family="Liberation Sans" font-weight="bold" font-size="14" fill="#1d5bb8">W</text></svg>
<svg style="left:277px;top:1048px" width="22" height="22"><rect x="0.5" y="0.5" width="21" height="21" rx="2" fill="#9fd49b" stroke="#2b7a2b"/><rect x="1" y="13" width="20" height="8" fill="#f4f4f4"/><path d="M12 11l10 3-2 7-9-2Z" fill="#fff" stroke="#2b7a2b" stroke-width="0.5"/><text x="2" y="15" font-family="Liberation Sans" font-weight="bold" font-size="14" fill="#2b7a2b">X</text></svg>
<svg style="left:326px;top:1048px" width="22" height="22"><rect x="0.5" y="0.5" width="21" height="21" rx="2" fill="#d7a9db" stroke="#7b2b8a"/><rect x="1" y="13" width="20" height="8" fill="#f4f4f4"/><path d="M12 11l10 3-2 7-9-2Z" fill="#fff" stroke="#7b2b8a" stroke-width="0.5"/><text x="2" y="15" font-family="Liberation Sans" font-weight="bold" font-size="14" fill="#7b2b8a">N</text></svg>
<svg style="left:375px;top:1048px" width="22" height="22"><rect x="0.5" y="0.5" width="21" height="21" rx="2" fill="#f7b48d" stroke="#d24816"/><rect x="1" y="13" width="20" height="8" fill="#f4f4f4"/><path d="M12 11l10 3-2 7-9-2Z" fill="#fff" stroke="#d24816" stroke-width="0.5"/><text x="2" y="15" font-family="Liberation Sans" font-weight="bold" font-size="14" fill="#d24816">P</text></svg>
<svg style="left:424px;top:1048px" width="24" height="24"><rect width="24" height="24" fill="#68217a"/><path d="M15.5 3L20 5V19L15.5 21L8 13.5 4.5 16.5 3 15.5V8.5L4.5 7.5 8 10.5Z M15.5 8L11 12 15.5 16Z M5 10V14L7 12Z" fill="#fff" fill-rule="evenodd"/></svg>
<svg style="left:473px;top:1049px" width="23" height="22"><rect x="1" y="1" width="21" height="20" fill="#3a3a3a" stroke="#f2b921" stroke-width="1.5"/><path d="M6 4L17 11 6 18Z" fill="#f2c331"/><path d="M9 11l2-2 2 2-2 2Z" fill="#000"/><path d="M0 8h6M0 14h6M17 11h6" stroke="#5aa0d8" stroke-width="1"/><text x="13" y="20" font-family="Liberation Sans" font-size="6" fill="#ddd">16</text></svg>
<svg style="left:522px;top:1050px" width="23" height="20"><path d="M0 2h8l2 2h12v13H0Z" fill="#f8d775"/><rect x="0" y="5" width="22" height="12" fill="#fce49b"/><path d="M7 19v-6h9v6h-3v-3h-3v3Z" fill="#2a9ce8"/></svg>
<svg style="left:571px;top:1048px" width="23" height="24"><path d="M1 14L6 2 22 5 20 17Z" fill="#22304a"/><path d="M1 14l19 3v3L1 17Z" fill="#999"/><path d="M1 17l19 3v2L1 19Z" fill="#777"/><rect x="10" y="7" width="6" height="4" fill="#e48a3c"/></svg>
<svg style="left:620px;top:1048px" width="23" height="22"><rect x="0" y="0" width="22" height="22" fill="#f7b63c"/><ellipse cx="8" cy="9" rx="5" ry="6" fill="none" stroke="#fff" stroke-width="2.5"/><circle cx="17" cy="9" r="3.5" fill="#fff" stroke="#e07b1a"/><path d="M4 17l9-3 8 4v4H4Z" fill="#fff3c8"/></svg>
<svg style="left:670px;top:1049px" width="22" height="22"><path d="M20.5 12.5H6.5c0.3 3.5 3 5.5 6.5 5.5 2.5 0 5-0.8 7-2.3v4c-2 1.3-4.5 2.3-7.5 2.3C6 22 1.5 17.5 1.5 11S6.5 0.5 12 0.5c5.5 0 9 4 9 9.5Z M6.8 9H15.5c-0.2-2.7-2-4.5-4.3-4.5S7.3 6.3 6.8 9Z" fill="#1e7bd7" fill-rule="evenodd"/></svg>
<svg style="left:718px;top:1048px" width="24" height="24"><path d="M12 1a10.5 10.5 0 1 0 6 19l4 2-1.5-4A10.5 10.5 0 0 0 12 1Z" fill="#fff"/><path d="M13 8v8c0 2-2 3-4 2" stroke="#2a2a5a" stroke-width="2" fill="none"/><path d="M12 6c0-2 1-3 2-3" stroke="#2aa52a" stroke-width="1.5"/></svg>
<div style="left:755px;top:1040px;width:48px;height:40px;background:#3b3b3b"></div>
<svg style="left:767px;top:1048px" width="24" height="24"><rect width="24" height="24" fill="#f00"/><path d="M0 0H24V13C22 16 20 19 18 19 14 19 11 6 6 6 3 6 1 9 0 11Z" fill="#00f"/><path d="M0 11C1 9 3 6 6 6 11 6 14 19 18 19 20 19 22 16 24 13" stroke="#fff" stroke-width="1.6" fill="none"/></svg>
<svg style="left:815px;top:1048px" width="25" height="24"><ellipse cx="11" cy="14" rx="10" ry="7.5" fill="#cfe6f7" stroke="#8fb5d0" stroke-width="0.8" transform="rotate(-20 11 14)"/><circle cx="5" cy="15" r="1.8" fill="#e05050"/><circle cx="8" cy="10" r="1.8" fill="#50b050"/><circle cx="13" cy="8" r="1.8" fill="#e0b030"/><circle cx="9" cy="16" r="1.2" fill="#0a0a0a"/><path d="M11 23L21 5" stroke="#e8952a" stroke-width="2"/><path d="M19 6l3-5 3 3Z" fill="#d9a05a"/></svg>
<div style="left:514px;top:1078px;width:40px;height:2px;background:#76b9ed"></div>
<div style="left:612px;top:1078px;width:40px;height:2px;background:#76b9ed"></div>
<div style="left:661px;top:1078px;width:40px;height:2px;background:#76b9ed"></div>
<div style="left:710px;top:1078px;width:40px;height:2px;background:#76b9ed"></div>
<div style="left:755px;top:1078px;width:47px;height:2px;background:#76b9ed"></div>
<div style="left:808px;top:1078px;width:40px;height:2px;background:#76b9ed"></div>
<div style="left:1600px;top:1052px;width:1px;height:16px;background:#555"></div>
<div style="left:1603px;top:1052px;width:1px;height:16px;background:#555"></div>
<div class="t ui" style="left:1616px;top:1053px;color:#fff;font-size:11.5px">CH</div>
<div style="left:1640px;top:1051px;width:14px;height:14px;background:#fff"></div>
<div class="t ui" style="left:1641px;top:1053px;color:#000;font-size:12px;font-weight:normal">M</div>
<svg style="left:1700px;top:1051px" width="15" height="17"><circle cx="10" cy="4" r="2.6" stroke="#fff" fill="none"/><path d="M6 11c0-3 2-4 4-4s4 1 4 4" stroke="#fff" fill="none"/><circle cx="5" cy="9" r="2.6" stroke="#fff" fill="none"/><path d="M0.5 16c0-3 2-4 4.5-4s4.5 1 4.5 4" stroke="#fff" fill="none"/></svg>
<svg style="left:1737px;top:1056px" width="13" height="8"><path d="M0.5 7.5L6.5 1.5 12.5 7.5" stroke="#fff" stroke-width="1.2" fill="none"/></svg>
<svg style="left:1761px;top:1054px" width="15" height="14"><path d="M1 7a10 10 0 0 1 13 0M3 9.5a7 7 0 0 1 9 0M5 11.5a4 4 0 0 1 5 0" stroke="#ddd" stroke-width="1" fill="none" transform="rotate(-20 8 8)"/><circle cx="11" cy="12" r="1.3" fill="#fff"/></svg>
<svg style="left:1782px;top:1052px" width="17" height="16"><path d="M1 5h3l4-4v14l-4-4H1Z" stroke="#fff" fill="none"/><path d="M10 5c1.5 1.5 1.5 4.5 0 6M12.5 3c2.5 2.5 2.5 7.5 0 10M15 1.5c3 3 3 10 0 13" stroke="#bbb" fill="none"/></svg>
<div class="t ui" style="left:1813px;top:1046px;color:#fff;font-size:11.5px">5:26 AM</div>
<div class="t ui" style="left:1809px;top:1064px;color:#fff;font-size:11.5px">8/31/2018</div>
<svg style="left:1878px;top:1051px" width="26" height="26"><path d="M1 1h16v11H7l-4 3v-3H1Z" fill="#fff"/><path d="M4 4h10M4 6.5h10M4 9h7" stroke="#0a0a0a" stroke-width="1"/><circle cx="16.5" cy="17" r="6.5" fill="#2a2a2a" stroke="#666"/><text x="13.2" y="21.2" font-family="Liberation Sans" font-size="11" fill="#fff">2</text></svg>
<div style="left:1915px;top:1040px;width:1px;height:40px;background:#333"></div>
</body></html>
